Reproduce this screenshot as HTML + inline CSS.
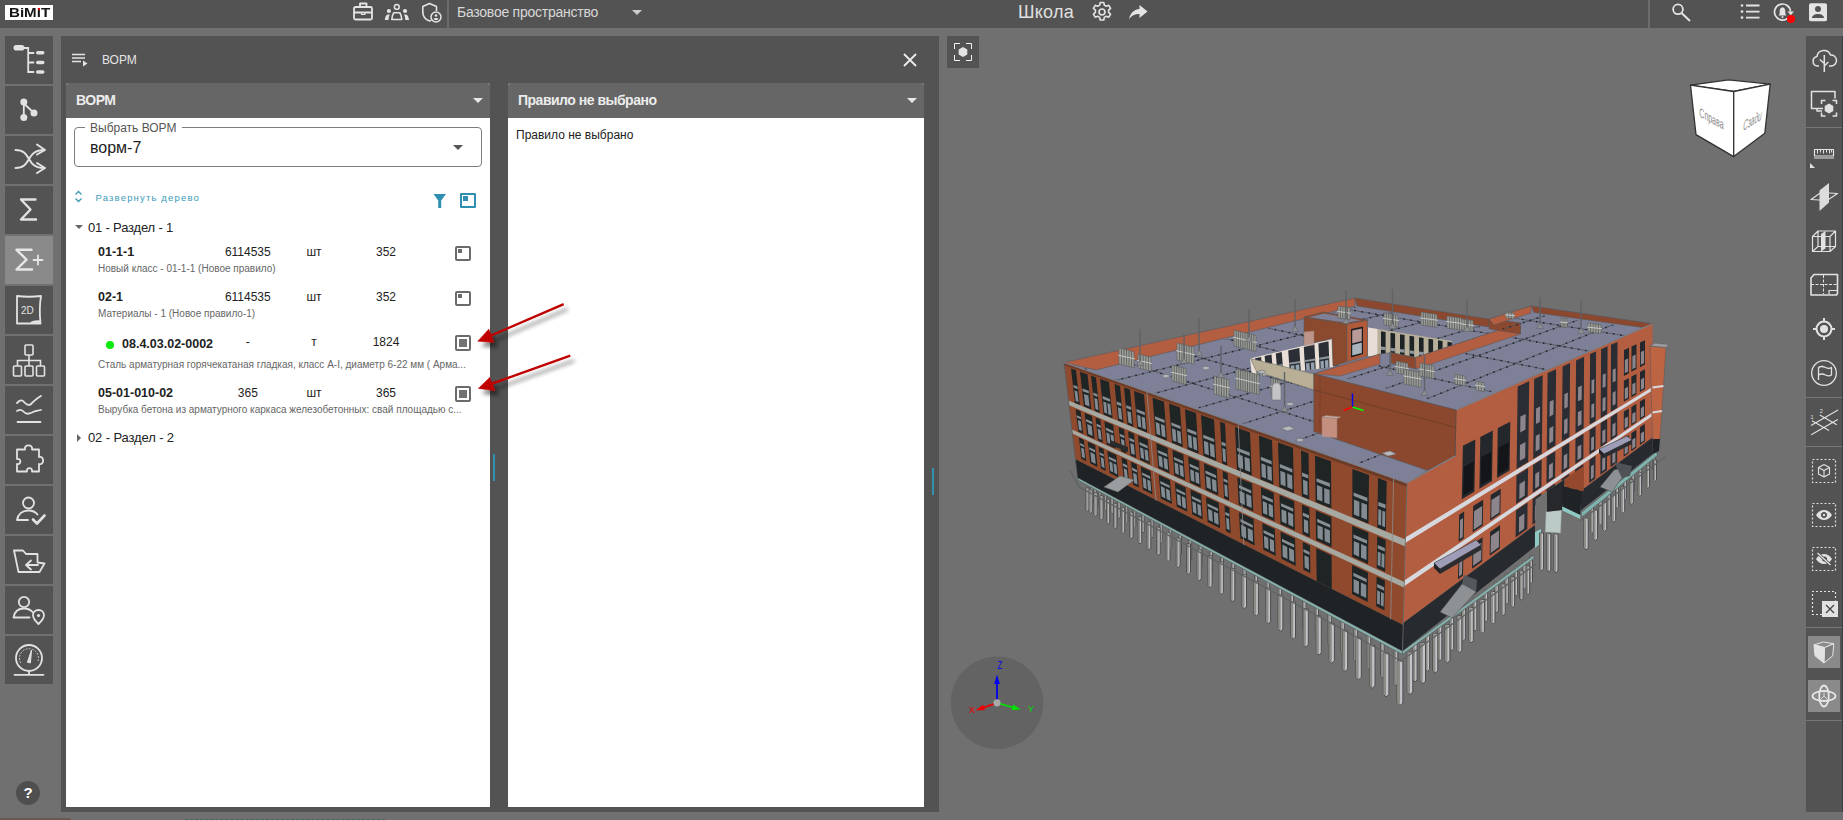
<!DOCTYPE html>
<html lang="ru">
<head>
<meta charset="utf-8">
<title>BIMIT - ВОРМ</title>
<style>
*{box-sizing:border-box;margin:0;padding:0}
html,body{width:1843px;height:820px;overflow:hidden;background:#707070;font-family:"Liberation Sans",sans-serif;color:#222}
.abs{position:absolute}
#top{position:absolute;left:0;top:0;width:1843px;height:28px;background:#535353}
#logo{position:absolute;left:5px;top:5px;width:48px;height:15px;background:#fff;color:#151515;font-weight:bold;font-size:12px;line-height:15px;white-space:nowrap;overflow:hidden}
#logo span{position:absolute;left:3.500px;top:1px;display:inline-block;transform-origin:0 0;transform:scaleX(1.260)}
#logo i{position:absolute;left:32.600px;top:2.900px;width:2.300px;height:2.100px;background:#f00000}
.tdiv{position:absolute;top:0;width:2px;height:28px;background:#6c6c6c}
#space{position:absolute;left:457px;top:0;line-height:25px;font-size:14px;letter-spacing:-0.25px;color:#d8d8d8;white-space:nowrap}
#title{position:absolute;left:1018px;top:0;line-height:24px;font-size:18px;letter-spacing:0.25px;color:#e0e0e0;white-space:nowrap}
.caret{position:absolute;width:0;height:0;border-left:5px solid transparent;border-right:5px solid transparent;border-top:5px solid #ccc}
.lb{position:absolute;left:5px;width:48px;height:48px;background:#535353}
.lb.act{background:#8a8a8a}
.rb{position:absolute;left:1805px;width:36px;background:#535353}
#panel{position:absolute;left:61px;top:36px;width:878px;height:776px;background:#535353}
.card{position:absolute;background:#fff;border-radius:3px 3px 0 0;overflow:hidden}
.chead{position:absolute;left:0;top:0;right:0;height:35px;background:#666;color:#ececec;font-weight:bold;font-size:14px;line-height:35px;padding-left:10px;white-space:nowrap;letter-spacing:-0.5px}
.row{position:absolute;left:0;width:424px;white-space:nowrap}
.t{position:absolute;white-space:nowrap;line-height:16px;color:#222}
.t.c{text-align:center}
.t.b{font-weight:bold}
.t.s{color:#666}
.code{position:absolute;font-weight:bold;font-size:12.5px;color:#222}
.num{position:absolute;font-size:12px;color:#222;text-align:center;width:60px}
.sub{position:absolute;font-size:9.5px;color:#555}
</style>
</head>
<body>
<div id="top">
  <div id="logo"><span>BiMiT</span><i></i></div>
  <div class="tdiv" style="left:447px"></div>
  <div id="space">Базовое пространство</div>
  <div class="caret" style="left:632px;top:10px"></div>
  <div id="title">Школа</div>
  <div class="tdiv" style="left:1648px"></div>
<svg class="abs" style="left:0;top:0" width="1843" height="28" viewBox="0 0 1843 28" fill="none" stroke="#e4e4e4" stroke-width="1.800" stroke-linejoin="round">
<rect x="354" y="7" width="18" height="12.500" rx="1.500"/><path d="M360 7V3.500h6.500V7M354 12.500h18" /><path d="M361.500 12.500v2h3.500v-2" stroke-width="1.200"/>
<circle cx="396.800" cy="6.900" r="2.400" stroke-width="1.500"/><circle cx="388.900" cy="11" r="2.100" fill="#e4e4e4" stroke="none"/><circle cx="405" cy="11" r="2.100" fill="#e4e4e4" stroke="none"/>
<path d="M391.800 19.500c0.300-3 1-5.500 2-6.800h6c1 1.300 1.700 3.800 2 6.800z" stroke-width="1.600"/>
<path d="M384.800 20c0.300-3 1.300-5.300 3-5.500h2c-0.800 1.500-1.200 3.500-1.300 5.500zM409 20c-0.300-3-1.300-5.300-3-5.500h-2c0.800 1.500 1.200 3.500 1.300 5.500z" fill="#e4e4e4" stroke="none"/>
<path d="M436.500 11V6.500L429.500 3.500L422.800 6.500v5.500c0 4 2.500 7.500 6.700 9c0.700-0.300 1.300-0.600 1.800-0.900" stroke-width="1.600"/>
<circle cx="436" cy="17" r="5" stroke-width="1.500"/><circle cx="436" cy="15.500" r="1.300" fill="#e4e4e4" stroke="none"/><path d="M433.500 19c1-1.300 4-1.300 5 0c-1 1.500-4 1.500-5 0z" fill="#e4e4e4" stroke="none"/>
<!-- gear -->
<g transform="translate(1102 12)"><circle r="3" stroke-width="1.700"/><path d="M-1.800 -9.500h3.600l0.500 2.600l2 1.100l2.500-0.900l1.800 3.100l-2 1.700v2.300l2 1.700l-1.800 3.100l-2.500-0.900l-2 1.100l-0.500 2.600h-3.600l-0.500-2.600l-2-1.100l-2.500 0.900l-1.800-3.100l2-1.700v-2.300l-2-1.700l1.800-3.100l2.500 0.900l2-1.100z" stroke-width="1.600"/></g>
<!-- share -->
<path d="M1139.500 5l8 6.500l-8 6.500v-4c-5 0-8 1.500-10.500 5.500c1-6 4.500-10 10.500-10.500z" fill="#e4e4e4" stroke="none"/>
<!-- search -->
<circle cx="1678" cy="9.300" r="4.900" stroke-width="1.800"/><path d="M1681.500 13l8.500 8" stroke-width="2"/>
<!-- list -->
<path d="M1746 5.500h13.500M1746 11.600h13.500M1746 17.600h13.500" stroke-width="1.800"/><circle cx="1742" cy="5.500" r="1.300" fill="#e4e4e4" stroke="none"/><circle cx="1742" cy="11.600" r="1.300" fill="#e4e4e4" stroke="none"/><circle cx="1742" cy="17.600" r="1.300" fill="#e4e4e4" stroke="none"/>
<!-- bell -->
<path d="M1790.500 11.500a8 8 0 1 0 -3 6.800" stroke-width="1.700"/><path d="M1787.500 11.500h6.500l-3.300 3.800z" fill="#e4e4e4" stroke="none"/>
<path d="M1778.500 15.500c1.200-1 1.200-2.500 1.200-4.500c0-2 1-3.500 2.800-3.800c1.800 0.300 2.800 1.800 2.800 3.800c0 2 0 3.500 1.200 4.500z" fill="#e4e4e4" stroke="none"/><circle cx="1782.500" cy="17" r="1" fill="#e4e4e4" stroke="none"/>
<circle cx="1791" cy="18.900" r="4" fill="#f00" stroke="none"/>
<!-- user -->
<rect x="1809" y="3.300" width="18" height="18" rx="1.800" fill="#e4e4e4" stroke="none"/><circle cx="1818" cy="9" r="3" fill="#535353" stroke="none"/><path d="M1812 18c0-2.500 3-4 6-4s6 1.500 6 4z" fill="#535353" stroke="none"/>
</svg>

</div>
<div id="left">
<div class="lb" style="top:36px"><svg width="48" height="48" viewBox="0 0 48 48" fill="none" stroke="#e2e2e2" stroke-width="2" stroke-linecap="round"><rect x="9.5" y="10" width="9" height="3.6" rx="1.8" fill="#e2e2e2"/><path d="M18 12h5.2v24h6M23.2 17h6M23.2 26.5h6" stroke-linecap="butt" stroke-width="1.8"/><rect x="31" y="15" width="8.5" height="3.6" rx="1.8" fill="#e2e2e2" stroke="none"/><rect x="31" y="24.7" width="8.5" height="3.6" rx="1.8" fill="#e2e2e2" stroke="none"/><rect x="31" y="34.2" width="8.5" height="3.6" rx="1.8" fill="#e2e2e2" stroke="none"/></svg></div>
<div class="lb" style="top:86px"><svg width="48" height="48" viewBox="0 0 48 48" fill="#e2e2e2" stroke="#e2e2e2" stroke-width="1.8"><circle cx="18.8" cy="16" r="2.6"/><circle cx="18.8" cy="31.5" r="2.6"/><circle cx="29" cy="27" r="2.6"/><path d="M18.8 16v15.5M18.8 17.5L29 27" fill="none"/></svg></div>
<div class="lb" style="top:136px"><svg width="48" height="48" viewBox="0 0 48 48" fill="none" stroke="#e2e2e2" stroke-width="2" stroke-linecap="round" stroke-linejoin="round"><path d="M10.5 14c9 0 11 5 13.5 9s5 9 15 9M10.500 32c9 0 11-5 13.500-9s5-9 15-9"/><path d="M32 8.500l8 5.500l-8 4.500M32 27l8 5l-8 5"/></svg></div>
<div class="lb" style="top:186px"><svg width="48" height="48" viewBox="0 0 48 48" fill="none" stroke="#e2e2e2" stroke-width="2.400" stroke-linecap="round" stroke-linejoin="round"><path d="M30.500 13.500H16l9.500 10L16 33.500h15"/></svg></div>
<div class="lb act" style="top:236px"><svg width="48" height="48" viewBox="0 0 48 48" fill="none" stroke="#e6e6e6" stroke-width="2.400" stroke-linecap="round" stroke-linejoin="round"><path d="M26.500 13.800H11.500l10 9.800L11.500 33.500h15.500"/><path d="M33 19.500v9M28.500 24h9" stroke-width="1.800"/></svg></div>
<div class="lb" style="top:286px"><svg width="48" height="48" viewBox="0 0 48 48" fill="none" stroke="#e2e2e2" stroke-width="1.800" stroke-linejoin="round"><path d="M12 10c8 1 16 1 24 0c-1.500 9-1.500 18-0.500 27.500H12z"/><path d="M25 37c1-2 5-3 10-2.500v3z" fill="#e2e2e2" stroke="none"/><text x="16" y="28" font-family="Liberation Sans, sans-serif" font-size="10" fill="#e2e2e2" stroke="none">2D</text></svg></div>
<div class="lb" style="top:336px"><svg width="48" height="48" viewBox="0 0 48 48" fill="none" stroke="#e2e2e2" stroke-width="1.600"><rect x="20" y="9" width="8" height="10" rx="1"/><rect x="8.500" y="30" width="8" height="10" rx="1"/><rect x="20" y="30" width="8" height="10" rx="1"/><rect x="31.500" y="30" width="8" height="10" rx="1"/><path d="M24 19v11M12.500 30v-5.500h23V30"/></svg></div>
<div class="lb" style="top:386px"><svg width="48" height="48" viewBox="0 0 48 48" fill="none" stroke="#e2e2e2" stroke-width="1.800" stroke-linecap="round" stroke-linejoin="round"><path d="M12 17c3-3 5-3.500 7-1s5 4 7 2s6-6 10-8"/><path d="M12 25c3-2 5-1.500 7 1s5 2 8 0.500s5-1.500 9-2.500"/><path d="M12.500 36h23"/></svg></div>
<div class="lb" style="top:436px"><svg width="48" height="48" viewBox="0 0 48 48" fill="none" stroke="#e2e2e2" stroke-width="1.800" stroke-linejoin="round"><path d="M20 13.500c-1.500-5.500 8.500-5.500 7 0h7v7.500c5.500-1.500 5.500 8.500 0 7v7.500h-7c1-4.500-6-4.500-5 0h-10v-7.500c4.500 1 4.500-6 0-5v-9.500z"/></svg></div>
<div class="lb" style="top:486px"><svg width="48" height="48" viewBox="0 0 48 48" fill="none" stroke="#e2e2e2" stroke-width="1.800" stroke-linecap="round" stroke-linejoin="round"><circle cx="23.500" cy="17" r="5.500"/><path d="M12 34c1-6 5.500-9.500 11.500-9.500c4 0 7 1.500 9 4M12 34h11"/><path d="M28 33.500l4 4l7.500-8" stroke-width="2.600"/></svg></div>
<div class="lb" style="top:536px"><svg width="48" height="48" viewBox="0 0 48 48" fill="none" stroke="#e2e2e2" stroke-width="1.800" stroke-linecap="round" stroke-linejoin="round"><path d="M9 14.500h9l3 3.500h11.500v8.500l7 1l-5 8.500H13.500z"/><path d="M33 29H21.500M26 24.500L21 29l5 4.500"/></svg></div>
<div class="lb" style="top:586px"><svg width="48" height="48" viewBox="0 0 48 48" fill="none" stroke="#e2e2e2" stroke-width="1.800" stroke-linecap="round" stroke-linejoin="round"><circle cx="19" cy="16" r="5.200"/><path d="M8.500 31.500c1-6 5-9 10.500-9c4 0 7 1.500 9 4M8.500 31.500h16"/><path d="M33.500 24c-3 0-5.500 2.200-5.500 5.200c0 3.500 5.500 8.800 5.500 8.800s5.500-5.300 5.500-8.800c0-3-2.500-5.200-5.500-5.200z" fill="#535353"/><circle cx="33.500" cy="29.500" r="1.600" fill="#e2e2e2" stroke="none"/></svg></div>
<div class="lb" style="top:636px"><svg width="48" height="48" viewBox="0 0 48 48" fill="none" stroke="#e2e2e2" stroke-width="1.800" stroke-linecap="round"><circle cx="24" cy="22" r="13"/><path d="M15.500 26.500a9.500 9.500 0 1 1 17 0" stroke-width="1" stroke-dasharray="1 2.200" opacity=".85"/><path d="M22.500 26l4-12l-1 12.500z" fill="#e2e2e2" stroke-width="1"/><path d="M24 35v3.500M9.500 38.800h29"/></svg></div>
<div class="abs" style="left:16px;top:781px;width:24px;height:24px;border-radius:12px;background:#4f4f4f;color:#fff;font-weight:bold;font-size:15px;line-height:24px;text-align:center">?</div>
</div>

<div class="abs" style="left:0;top:818px;width:71px;height:2px;background:#6a5853"></div>
<div class="abs" style="left:185px;top:818.500px;width:200px;height:0;border-top:1.500px dashed #3f5f62;opacity:.8"></div>
<div id="panel">
  <svg class="abs" style="left:9px;top:16px" width="20" height="16" viewBox="0 0 20 16" fill="none" stroke="#e4e4e4" stroke-width="1.600"><path d="M2 2.500h13M2 6h13M2 9.500h9"/><path d="M13 8.500v6l4.500-3z" fill="#e4e4e4" stroke="none"/></svg>
  <svg class="abs" style="left:841px;top:16px" width="16" height="16" viewBox="0 0 16 16" fill="none" stroke="#ececec" stroke-width="1.800"><path d="M2 2l12 12M14 2L2 14"/></svg>
  <div class="abs" style="left:41px;top:12px;font-size:12px;line-height:24px;color:#e4e4e4">ВОРМ</div>
  <div class="card" id="c1" style="left:5px;top:47px;width:424px;height:724px">
    <div class="chead">ВОРМ</div>
    <div class="caret" style="left:407px;top:15px;border-top-color:#e8e8e8"></div>
<div class="abs" style="left:8px;top:44px;width:408px;height:40px;border:1px solid #7d7d7d;border-radius:4px"></div>
<div class="abs" style="left:19px;top:36px;width:97px;height:16px;background:#fff"></div>
<div id="t_lbl" class="t " style="left:24px;top:36.5px;font-size:12px;color:#555;">Выбрать ВОРМ</div>
<div id="t_sel" class="t " style="left:24px;top:57px;font-size:16px;color:#222;">ворм-7</div>
<div class="caret" style="left:387px;top:62px;border-top-color:#555;border-left-width:5px;border-right-width:5px;border-top-width:5px"></div>
<svg class="abs" style="left:6px;top:106px" width="14" height="16" viewBox="0 0 14 16" fill="none" stroke="#3a9ab8" stroke-width="1.300"><path d="M3.500 5.500L6.500 2.500L9.500 5.500M3.500 9.500L6.500 12.500L9.500 9.500"/></svg>
<div id="t_exp" class="t " style="left:29.5px;top:106.5px;font-size:9.5px;color:#3a9ab8;letter-spacing:1.17px;">Развернуть дерево</div>
<svg class="abs" style="left:366px;top:109px" width="16" height="18" viewBox="0 0 16 18"><path d="M1.500 2h12.500l-4.800 6.500v7.500h-3v-7.500z" fill="#2f8fb2"/></svg>
<div class="abs" style="left:394px;top:110px;width:16px;height:15px;border:2px solid #2f8fb2;border-radius:1px"><div style="position:absolute;left:0.500px;top:0.500px;width:5.500px;height:5px;background:#2f8fb2"></div></div>
<div class="caret" style="left:9px;top:142px;border-top-color:#666;border-left-width:4px;border-right-width:4px;border-top-width:4px"></div>
<div id="t_s1" class="t " style="letter-spacing:-0.18px;left:22px;top:136.5px;font-size:13px;">01 - Раздел - 1</div>
<div id="t_r1" class="t b" style="left:32px;top:160.5px;font-size:12.5px;">01-1-1</div>
<div id="t_r1a" class="t c " style="left:141.8px;width:80px;top:160.5px;font-size:12px">6114535</div>
<div id="t_r1b" class="t c " style="left:208px;width:80px;top:160.5px;font-size:12px">шт</div>
<div id="t_r1c" class="t c " style="left:280px;width:80px;top:160.5px;font-size:12px">352</div>
<div class="abs" style="left:389px;top:162.5px;width:16px;height:15.500px;border:2px solid #6b6b6b;border-radius:2px"><div style="position:absolute;left:1px;top:1px;width:4px;height:4px;background:#6b6b6b"></div></div>
<div id="t_u1" class="t s" style="left:32px;top:177.8px;font-size:10px;">Новый класс - 01-1-1 (Новое правило)</div>
<div id="t_r2" class="t b" style="left:32px;top:205.5px;font-size:12.5px;">02-1</div>
<div id="t_r2a" class="t c " style="left:141.8px;width:80px;top:205.5px;font-size:12px">6114535</div>
<div id="t_r2b" class="t c " style="left:208px;width:80px;top:205.5px;font-size:12px">шт</div>
<div id="t_r2c" class="t c " style="left:280px;width:80px;top:205.5px;font-size:12px">352</div>
<div class="abs" style="left:389px;top:207.5px;width:16px;height:15.500px;border:2px solid #6b6b6b;border-radius:2px"><div style="position:absolute;left:1px;top:1px;width:4px;height:4px;background:#6b6b6b"></div></div>
<div id="t_u2" class="t s" style="left:32px;top:222.8px;font-size:10px;">Материалы - 1 (Новое правило-1)</div>
<div class="abs" style="left:40px;top:258.3px;width:8px;height:8px;border-radius:4px;background:#0be80b"></div>
<div id="t_r3" class="t b" style="left:56px;top:252.5px;font-size:12.5px;">08.4.03.02-0002</div>
<div id="t_r3a" class="t c " style="left:141.8px;width:80px;top:251px;font-size:12px">-</div>
<div id="t_r3b" class="t c " style="left:208px;width:80px;top:251px;font-size:12px">т</div>
<div id="t_r3c" class="t c " style="left:280px;width:80px;top:251px;font-size:12px">1824</div>
<div class="abs" style="left:389px;top:252.2px;width:16px;height:15.500px;border:2px solid #6b6b6b;border-radius:2px"><div style="position:absolute;left:1.800px;top:1.800px;width:8.400px;height:8px;background:#727272"></div></div>
<div id="t_u3" class="t s" style="left:32px;top:274px;font-size:10px;">Сталь арматурная горячекатаная гладкая, класс A-I, диаметр 6-22 мм ( Арма...</div>
<div id="t_r4" class="t b" style="left:32px;top:301.8px;font-size:12.5px;">05-01-010-02</div>
<div id="t_r4a" class="t c " style="left:141.8px;width:80px;top:301.8px;font-size:12px">365</div>
<div id="t_r4b" class="t c " style="left:208px;width:80px;top:301.8px;font-size:12px">шт</div>
<div id="t_r4c" class="t c " style="left:280px;width:80px;top:301.8px;font-size:12px">365</div>
<div class="abs" style="left:389px;top:303.0px;width:16px;height:15.500px;border:2px solid #6b6b6b;border-radius:2px"><div style="position:absolute;left:1.800px;top:1.800px;width:8.400px;height:8px;background:#727272"></div></div>
<div id="t_u4" class="t s" style="left:32px;top:319px;font-size:10px;">Вырубка бетона из арматурного каркаса железобетонных: свай площадью с...</div>
<div class="abs" style="left:11px;top:350.5px;width:0;height:0;border-top:4px solid transparent;border-bottom:4px solid transparent;border-left:4px solid #666"></div>
<div id="t_s2" class="t " style="letter-spacing:-0.12px;left:22px;top:347px;font-size:13px;">02 - Раздел - 2</div>
  </div>
  <div class="card" id="c2" style="left:447px;top:47px;width:416px;height:724px">
    <div class="chead">Правило не выбрано</div>
    <div class="caret" style="left:399px;top:15px;border-top-color:#e8e8e8"></div>
    <div class="abs" style="left:8px;top:45px;font-size:12px;line-height:14px;color:#222">Правило не выбрано</div>
  </div>
</div>
<svg class="abs" style="left:460px;top:290px;z-index:5" width="140" height="120" viewBox="460 290 140 120">
<defs><filter id="sh" x="-20%" y="-20%" width="150%" height="150%"><feGaussianBlur in="SourceAlpha" stdDeviation="2"/><feOffset dx="4" dy="4.500"/><feComponentTransfer><feFuncA type="linear" slope="0.480"/></feComponentTransfer><feMerge><feMergeNode/><feMergeNode in="SourceGraphic"/></feMerge></filter></defs>
<g filter="url(#sh)" fill="#c00000" stroke="#c00000">
<path d="M563.700 304.200L490 336" stroke-width="2.400" fill="none"/><path d="M477.800 341.200L488.800 329.200L493.900 342.300z" stroke-width=".6"/>
<path d="M570.300 355.600L491 384" stroke-width="2.400" fill="none"/><path d="M478.400 388.400L489.800 377.400L494.900 390.600z" stroke-width=".6"/>
</g></svg>
<div class="abs" style="left:493px;top:454px;width:2px;height:27px;background:#3391b0"></div>
<div class="abs" style="left:932px;top:468px;width:2px;height:27px;background:#3391b0"></div>
<svg id="viewer" class="abs" style="left:939px;top:28px" width="867" height="792" viewBox="939 28 867 792" font-family="Liberation Sans, sans-serif">
<g id="bld">
<g id="piles">
<path d="M1090.9 484h2.2v17l-1.1 1l-1.1 -1z" fill="#c2c2c8" stroke="#4c4c4c" stroke-width="1"/>
<path d="M1091.2 484h1v17.7l-1 -0.7z" fill="#8b8c86"/>
<path d="M1094 485.7h2.2v17.2l-1.1 1l-1.1 -1z" fill="#c2c2c8" stroke="#4c4c4c" stroke-width="1"/>
<path d="M1094.3 485.7h1v17.9l-1 -0.7z" fill="#8b8c86"/>
<path d="M1098.7 488.2h2.2v17.5l-1.1 1l-1.1 -1z" fill="#c2c2c8" stroke="#4c4c4c" stroke-width="1"/>
<path d="M1099 488.2h1v18.2l-1 -0.7z" fill="#8b8c86"/>
<path d="M1104.4 491.3h2.3v17.8l-1.1 1l-1.1 -1z" fill="#c2c2c8" stroke="#4c4c4c" stroke-width="1"/>
<path d="M1104.7 491.3h1v18.5l-1 -0.7z" fill="#8b8c86"/>
<path d="M1110.9 494.8h2.3v18.3l-1.1 1l-1.1 -1z" fill="#c2c2c8" stroke="#4c4c4c" stroke-width="1"/>
<path d="M1111.2 494.8h1v18.9l-1 -0.7z" fill="#8b8c86"/>
<path d="M1117.9 498.6h2.3v18.7l-1.2 1l-1.2 -1z" fill="#c2c2c8" stroke="#4c4c4c" stroke-width="1"/>
<path d="M1118.2 498.6h1v19.4l-1 -0.7z" fill="#8b8c86"/>
<path d="M1125.4 502.7h2.4v19.2l-1.2 1.1l-1.2 -1.1z" fill="#c2c2c8" stroke="#4c4c4c" stroke-width="1"/>
<path d="M1125.7 502.7h1.1v19.9l-1.1 -0.7z" fill="#8b8c86"/>
<path d="M1133.4 507h2.4v19.7l-1.2 1.1l-1.2 -1.1z" fill="#c2c2c8" stroke="#4c4c4c" stroke-width="1"/>
<path d="M1133.7 507h1.1v20.4l-1.1 -0.7z" fill="#8b8c86"/>
<path d="M1141.8 511.5h2.4v20.2l-1.2 1.1l-1.2 -1.1z" fill="#c2c2c8" stroke="#4c4c4c" stroke-width="1"/>
<path d="M1142.1 511.5h1.1v20.9l-1.1 -0.7z" fill="#8b8c86"/>
<path d="M1150.6 516.3h2.5v20.7l-1.2 1.1l-1.2 -1.1z" fill="#c2c2c8" stroke="#4c4c4c" stroke-width="1"/>
<path d="M1150.9 516.3h1.1v21.5l-1.1 -0.7z" fill="#8b8c86"/>
<path d="M1159.7 521.2h2.5v21.3l-1.3 1.1l-1.3 -1.1z" fill="#c2c2c8" stroke="#4c4c4c" stroke-width="1"/>
<path d="M1160 521.2h1.1v22.1l-1.1 -0.8z" fill="#8b8c86"/>
<path d="M1169.2 526.3h2.6v21.9l-1.3 1.2l-1.3 -1.2z" fill="#c2c2c8" stroke="#4c4c4c" stroke-width="1"/>
<path d="M1169.5 526.3h1.2v22.7l-1.2 -0.8z" fill="#8b8c86"/>
<path d="M1178.9 531.6h2.6v22.5l-1.3 1.2l-1.3 -1.2z" fill="#c2c2c8" stroke="#4c4c4c" stroke-width="1"/>
<path d="M1179.2 531.6h1.2v23.3l-1.2 -0.8z" fill="#8b8c86"/>
<path d="M1189 537h2.7v23.1l-1.3 1.2l-1.3 -1.2z" fill="#c2c2c8" stroke="#4c4c4c" stroke-width="1"/>
<path d="M1189.3 537h1.2v23.9l-1.2 -0.8z" fill="#8b8c86"/>
<path d="M1199.3 542.6h2.7v23.8l-1.4 1.2l-1.4 -1.2z" fill="#c2c2c8" stroke="#4c4c4c" stroke-width="1"/>
<path d="M1199.6 542.6h1.2v24.6l-1.2 -0.8z" fill="#8b8c86"/>
<path d="M1209.9 548.3h2.7v24.5l-1.4 1.2l-1.4 -1.2z" fill="#c2c2c8" stroke="#4c4c4c" stroke-width="1"/>
<path d="M1210.2 548.3h1.2v25.3l-1.2 -0.8z" fill="#8b8c86"/>
<path d="M1220.7 554.2h2.8v25.1l-1.4 1.3l-1.4 -1.3z" fill="#c2c2c8" stroke="#4c4c4c" stroke-width="1"/>
<path d="M1221 554.2h1.3v26l-1.3 -0.8z" fill="#8b8c86"/>
<path d="M1231.8 560.2h2.9v25.8l-1.4 1.3l-1.4 -1.3z" fill="#c2c2c8" stroke="#4c4c4c" stroke-width="1"/>
<path d="M1232.1 560.2h1.3v26.7l-1.3 -0.9z" fill="#8b8c86"/>
<path d="M1243.1 566.3h2.9v26.5l-1.5 1.3l-1.5 -1.3z" fill="#c2c2c8" stroke="#4c4c4c" stroke-width="1"/>
<path d="M1243.4 566.3h1.3v27.4l-1.3 -0.9z" fill="#8b8c86"/>
<path d="M1254.6 572.5h3v27.3l-1.5 1.3l-1.5 -1.3z" fill="#c2c2c8" stroke="#4c4c4c" stroke-width="1"/>
<path d="M1254.9 572.5h1.3v28.1l-1.3 -0.9z" fill="#8b8c86"/>
<path d="M1266.3 578.9h3v28l-1.5 1.4l-1.5 -1.4z" fill="#c2c2c8" stroke="#4c4c4c" stroke-width="1"/>
<path d="M1266.6 578.9h1.4v28.9l-1.4 -0.9z" fill="#8b8c86"/>
<path d="M1278.3 585.3h3.1v28.7l-1.5 1.4l-1.5 -1.4z" fill="#c2c2c8" stroke="#4c4c4c" stroke-width="1"/>
<path d="M1278.6 585.3h1.4v29.7l-1.4 -0.9z" fill="#8b8c86"/>
<path d="M1290.4 591.9h3.1v29.5l-1.6 1.4l-1.6 -1.4z" fill="#c2c2c8" stroke="#4c4c4c" stroke-width="1"/>
<path d="M1290.7 591.9h1.4v30.4l-1.4 -0.9z" fill="#8b8c86"/>
<path d="M1302.8 598.6h3.2v30.3l-1.6 1.4l-1.6 -1.4z" fill="#c2c2c8" stroke="#4c4c4c" stroke-width="1"/>
<path d="M1303.1 598.6h1.4v31.2l-1.4 -1z" fill="#8b8c86"/>
<path d="M1315.3 605.3h3.2v31.1l-1.6 1.5l-1.6 -1.5z" fill="#c2c2c8" stroke="#4c4c4c" stroke-width="1"/>
<path d="M1315.6 605.3h1.5v32l-1.5 -1z" fill="#8b8c86"/>
<path d="M1328 612.2h3.3v31.9l-1.6 1.5l-1.6 -1.5z" fill="#c2c2c8" stroke="#4c4c4c" stroke-width="1"/>
<path d="M1328.3 612.2h1.5v32.8l-1.5 -1z" fill="#8b8c86"/>
<path d="M1340.9 619.2h3.4v32.7l-1.7 1.5l-1.7 -1.5z" fill="#c2c2c8" stroke="#4c4c4c" stroke-width="1"/>
<path d="M1341.2 619.2h1.5v33.7l-1.5 -1z" fill="#8b8c86"/>
<path d="M1354 626.3h3.4v33.5l-1.7 1.5l-1.7 -1.5z" fill="#c2c2c8" stroke="#4c4c4c" stroke-width="1"/>
<path d="M1354.3 626.3h1.5v34.5l-1.5 -1z" fill="#8b8c86"/>
<path d="M1367.2 633.4h3.5v34.3l-1.7 1.6l-1.7 -1.6z" fill="#c2c2c8" stroke="#4c4c4c" stroke-width="1"/>
<path d="M1367.5 633.4h1.6v35.4l-1.6 -1z" fill="#8b8c86"/>
<path d="M1380.6 640.7h3.5v35.2l-1.8 1.6l-1.8 -1.6z" fill="#c2c2c8" stroke="#4c4c4c" stroke-width="1"/>
<path d="M1380.9 640.7h1.6v36.2l-1.6 -1.1z" fill="#8b8c86"/>
<path d="M1394.2 648h3.6v36l-1.8 1.6l-1.8 -1.6z" fill="#c2c2c8" stroke="#4c4c4c" stroke-width="1"/>
<path d="M1394.5 648h1.6v37.1l-1.6 -1.1z" fill="#8b8c86"/>
<path d="M1086 488h3v22l-1.5 1.4l-1.5 -1.4z" fill="#c2c2c8" stroke="#4c4c4c" stroke-width="1"/>
<path d="M1086.3 488h1.4v22.9l-1.4 -0.9z" fill="#8b8c86"/>
<path d="M1089.2 489.8h3v22.2l-1.5 1.4l-1.5 -1.4z" fill="#c2c2c8" stroke="#4c4c4c" stroke-width="1"/>
<path d="M1089.5 489.8h1.4v23.1l-1.4 -0.9z" fill="#8b8c86"/>
<path d="M1094 492.5h3.1v22.5l-1.5 1.4l-1.5 -1.4z" fill="#c2c2c8" stroke="#4c4c4c" stroke-width="1"/>
<path d="M1094.3 492.5h1.4v23.4l-1.4 -0.9z" fill="#8b8c86"/>
<path d="M1099.9 495.7h3.1v22.9l-1.6 1.4l-1.6 -1.4z" fill="#c2c2c8" stroke="#4c4c4c" stroke-width="1"/>
<path d="M1100.2 495.7h1.4v23.8l-1.4 -0.9z" fill="#8b8c86"/>
<path d="M1106.5 499.4h3.2v23.3l-1.6 1.4l-1.6 -1.4z" fill="#c2c2c8" stroke="#4c4c4c" stroke-width="1"/>
<path d="M1106.8 499.4h1.4v24.3l-1.4 -1z" fill="#8b8c86"/>
<path d="M1113.7 503.4h3.2v23.8l-1.6 1.5l-1.6 -1.5z" fill="#c2c2c8" stroke="#4c4c4c" stroke-width="1"/>
<path d="M1114 503.4h1.5v24.8l-1.5 -1z" fill="#8b8c86"/>
<path d="M1121.4 507.7h3.3v24.3l-1.7 1.5l-1.7 -1.5z" fill="#c2c2c8" stroke="#4c4c4c" stroke-width="1"/>
<path d="M1121.7 507.7h1.5v25.3l-1.5 -1z" fill="#8b8c86"/>
<path d="M1129.6 512.3h3.4v24.8l-1.7 1.5l-1.7 -1.5z" fill="#c2c2c8" stroke="#4c4c4c" stroke-width="1"/>
<path d="M1129.9 512.3h1.5v25.8l-1.5 -1z" fill="#8b8c86"/>
<path d="M1138.2 517h3.5v25.4l-1.7 1.6l-1.7 -1.6z" fill="#c2c2c8" stroke="#4c4c4c" stroke-width="1"/>
<path d="M1138.5 517h1.6v26.4l-1.6 -1z" fill="#8b8c86"/>
<path d="M1147.2 522.1h3.6v25.9l-1.8 1.6l-1.8 -1.6z" fill="#c2c2c8" stroke="#4c4c4c" stroke-width="1"/>
<path d="M1147.5 522.1h1.6v27l-1.6 -1.1z" fill="#8b8c86"/>
<path d="M1156.6 527.3h3.6v26.5l-1.8 1.6l-1.8 -1.6z" fill="#c2c2c8" stroke="#4c4c4c" stroke-width="1"/>
<path d="M1156.9 527.3h1.6v27.6l-1.6 -1.1z" fill="#8b8c86"/>
<path d="M1166.3 532.6h3.7v27.2l-1.9 1.7l-1.9 -1.7z" fill="#c2c2c8" stroke="#4c4c4c" stroke-width="1"/>
<path d="M1166.6 532.6h1.7v28.3l-1.7 -1.1z" fill="#8b8c86"/>
<path d="M1176.3 538.2h3.8v27.8l-1.9 1.7l-1.9 -1.7z" fill="#c2c2c8" stroke="#4c4c4c" stroke-width="1"/>
<path d="M1176.6 538.2h1.7v28.9l-1.7 -1.1z" fill="#8b8c86"/>
<path d="M1186.6 543.9h3.9v28.5l-2 1.8l-2 -1.8z" fill="#c2c2c8" stroke="#4c4c4c" stroke-width="1"/>
<path d="M1186.9 543.9h1.8v29.6l-1.8 -1.2z" fill="#8b8c86"/>
<path d="M1197.2 549.8h4v29.1l-2 1.8l-2 -1.8z" fill="#c2c2c8" stroke="#4c4c4c" stroke-width="1"/>
<path d="M1197.5 549.8h1.8v30.3l-1.8 -1.2z" fill="#8b8c86"/>
<path d="M1208 555.9h4.1v29.8l-2 1.8l-2 -1.8z" fill="#c2c2c8" stroke="#4c4c4c" stroke-width="1"/>
<path d="M1208.3 555.9h1.8v31.1l-1.8 -1.2z" fill="#8b8c86"/>
<path d="M1219.2 562h4.2v30.6l-2.1 1.9l-2.1 -1.9z" fill="#c2c2c8" stroke="#4c4c4c" stroke-width="1"/>
<path d="M1219.5 562h1.9v31.8l-1.9 -1.3z" fill="#8b8c86"/>
<path d="M1230.5 568.4h4.3v31.3l-2.2 1.9l-2.2 -1.9z" fill="#c2c2c8" stroke="#4c4c4c" stroke-width="1"/>
<path d="M1230.8 568.4h1.9v32.6l-1.9 -1.3z" fill="#8b8c86"/>
<path d="M1242.1 574.8h4.4v32l-2.2 2l-2.2 -2z" fill="#c2c2c8" stroke="#4c4c4c" stroke-width="1"/>
<path d="M1242.4 574.8h2v33.4l-2 -1.3z" fill="#8b8c86"/>
<path d="M1253.9 581.4h4.5v32.8l-2.3 2l-2.3 -2z" fill="#c2c2c8" stroke="#4c4c4c" stroke-width="1"/>
<path d="M1254.2 581.4h2v34.1l-2 -1.4z" fill="#8b8c86"/>
<path d="M1266 588.1h4.6v33.6l-2.3 2.1l-2.3 -2.1z" fill="#c2c2c8" stroke="#4c4c4c" stroke-width="1"/>
<path d="M1266.3 588.1h2.1v35l-2.1 -1.4z" fill="#8b8c86"/>
<path d="M1278.2 594.9h4.7v34.4l-2.4 2.1l-2.4 -2.1z" fill="#c2c2c8" stroke="#4c4c4c" stroke-width="1"/>
<path d="M1278.5 594.9h2.1v35.8l-2.1 -1.4z" fill="#8b8c86"/>
<path d="M1290.7 601.8h4.8v35.2l-2.4 2.2l-2.4 -2.2z" fill="#c2c2c8" stroke="#4c4c4c" stroke-width="1"/>
<path d="M1291 601.8h2.2v36.6l-2.2 -1.5z" fill="#8b8c86"/>
<path d="M1303.3 608.9h5v36l-2.5 2.2l-2.5 -2.2z" fill="#c2c2c8" stroke="#4c4c4c" stroke-width="1"/>
<path d="M1303.6 608.9h2.2v37.5l-2.2 -1.5z" fill="#8b8c86"/>
<path d="M1316.2 616h5.1v36.8l-2.5 2.3l-2.5 -2.3z" fill="#c2c2c8" stroke="#4c4c4c" stroke-width="1"/>
<path d="M1316.5 616h2.3v38.3l-2.3 -1.5z" fill="#8b8c86"/>
<path d="M1329.2 623.3h5.2v37.6l-2.6 2.3l-2.6 -2.3z" fill="#c2c2c8" stroke="#4c4c4c" stroke-width="1"/>
<path d="M1329.5 623.3h2.3v39.2l-2.3 -1.6z" fill="#8b8c86"/>
<path d="M1342.4 630.6h5.3v38.5l-2.7 2.4l-2.7 -2.4z" fill="#c2c2c8" stroke="#4c4c4c" stroke-width="1"/>
<path d="M1342.7 630.6h2.4v40.1l-2.4 -1.6z" fill="#8b8c86"/>
<path d="M1355.9 638.1h5.4v39.3l-2.7 2.4l-2.7 -2.4z" fill="#c2c2c8" stroke="#4c4c4c" stroke-width="1"/>
<path d="M1356.2 638.1h2.4v41l-2.4 -1.6z" fill="#8b8c86"/>
<path d="M1369.4 645.6h5.6v40.2l-2.8 2.5l-2.8 -2.5z" fill="#c2c2c8" stroke="#4c4c4c" stroke-width="1"/>
<path d="M1369.7 645.6h2.5v41.9l-2.5 -1.7z" fill="#8b8c86"/>
<path d="M1383.2 653.3h5.7v41.1l-2.8 2.6l-2.8 -2.6z" fill="#c2c2c8" stroke="#4c4c4c" stroke-width="1"/>
<path d="M1383.5 653.3h2.6v42.8l-2.6 -1.7z" fill="#8b8c86"/>
<path d="M1397.1 661h5.8v42l-2.9 2.6l-2.9 -2.6z" fill="#c2c2c8" stroke="#4c4c4c" stroke-width="1"/>
<path d="M1397.4 661h2.6v43.7l-2.6 -1.7z" fill="#8b8c86"/>
<path d="M1529.5 556h3v26l-1.5 1.4l-1.5 -1.4z" fill="#c2c2c8" stroke="#4c4c4c" stroke-width="1"/>
<path d="M1529.8 556h1.4v26.9l-1.4 -0.9z" fill="#8b8c86"/>
<path d="M1522.9 560.8h3.1v26.7l-1.5 1.4l-1.5 -1.4z" fill="#c2c2c8" stroke="#4c4c4c" stroke-width="1"/>
<path d="M1523.2 560.8h1.4v27.6l-1.4 -0.9z" fill="#8b8c86"/>
<path d="M1514.4 567.1h3.2v27.6l-1.6 1.4l-1.6 -1.4z" fill="#c2c2c8" stroke="#4c4c4c" stroke-width="1"/>
<path d="M1514.7 567.1h1.4v28.5l-1.4 -0.9z" fill="#8b8c86"/>
<path d="M1505 574.1h3.3v28.5l-1.6 1.5l-1.6 -1.5z" fill="#c2c2c8" stroke="#4c4c4c" stroke-width="1"/>
<path d="M1505.3 574.1h1.5v29.5l-1.5 -1z" fill="#8b8c86"/>
<path d="M1494.9 581.5h3.4v29.6l-1.7 1.5l-1.7 -1.5z" fill="#c2c2c8" stroke="#4c4c4c" stroke-width="1"/>
<path d="M1495.2 581.5h1.5v30.6l-1.5 -1z" fill="#8b8c86"/>
<path d="M1484.2 589.4h3.5v30.7l-1.7 1.6l-1.7 -1.6z" fill="#c2c2c8" stroke="#4c4c4c" stroke-width="1"/>
<path d="M1484.5 589.4h1.6v31.7l-1.6 -1z" fill="#8b8c86"/>
<path d="M1473.2 597.6h3.6v31.8l-1.8 1.6l-1.8 -1.6z" fill="#c2c2c8" stroke="#4c4c4c" stroke-width="1"/>
<path d="M1473.5 597.6h1.6v32.9l-1.6 -1.1z" fill="#8b8c86"/>
<path d="M1461.7 606h3.7v33l-1.8 1.7l-1.8 -1.7z" fill="#c2c2c8" stroke="#4c4c4c" stroke-width="1"/>
<path d="M1462 606h1.7v34.1l-1.7 -1.1z" fill="#8b8c86"/>
<path d="M1449.9 614.7h3.8v34.2l-1.9 1.7l-1.9 -1.7z" fill="#c2c2c8" stroke="#4c4c4c" stroke-width="1"/>
<path d="M1450.2 614.7h1.7v35.3l-1.7 -1.1z" fill="#8b8c86"/>
<path d="M1437.9 623.6h3.9v35.4l-2 1.8l-2 -1.8z" fill="#c2c2c8" stroke="#4c4c4c" stroke-width="1"/>
<path d="M1438.2 623.6h1.8v36.6l-1.8 -1.2z" fill="#8b8c86"/>
<path d="M1425.5 632.7h4.1v36.7l-2 1.8l-2 -1.8z" fill="#c2c2c8" stroke="#4c4c4c" stroke-width="1"/>
<path d="M1425.8 632.7h1.8v37.9l-1.8 -1.2z" fill="#8b8c86"/>
<path d="M1412.9 642h4.2v38l-2.1 1.9l-2.1 -1.9z" fill="#c2c2c8" stroke="#4c4c4c" stroke-width="1"/>
<path d="M1413.2 642h1.9v39.3l-1.9 -1.3z" fill="#8b8c86"/>
<path d="M1526.3 566h3.4v27l-1.7 1.5l-1.7 -1.5z" fill="#c2c2c8" stroke="#4c4c4c" stroke-width="1"/>
<path d="M1526.6 566h1.5v28l-1.5 -1z" fill="#8b8c86"/>
<path d="M1519.6 570.8h3.5v27.7l-1.8 1.6l-1.8 -1.6z" fill="#c2c2c8" stroke="#4c4c4c" stroke-width="1"/>
<path d="M1519.9 570.8h1.6v28.8l-1.6 -1.1z" fill="#8b8c86"/>
<path d="M1510.9 577.1h3.7v28.7l-1.8 1.7l-1.8 -1.7z" fill="#c2c2c8" stroke="#4c4c4c" stroke-width="1"/>
<path d="M1511.2 577.1h1.7v29.8l-1.7 -1.1z" fill="#8b8c86"/>
<path d="M1501.3 584.1h3.9v29.7l-1.9 1.7l-1.9 -1.7z" fill="#c2c2c8" stroke="#4c4c4c" stroke-width="1"/>
<path d="M1501.6 584.1h1.7v30.9l-1.7 -1.2z" fill="#8b8c86"/>
<path d="M1490.9 591.5h4.1v30.9l-2 1.8l-2 -1.8z" fill="#c2c2c8" stroke="#4c4c4c" stroke-width="1"/>
<path d="M1491.2 591.5h1.8v32.1l-1.8 -1.2z" fill="#8b8c86"/>
<path d="M1480.1 599.4h4.3v32l-2.1 1.9l-2.1 -1.9z" fill="#c2c2c8" stroke="#4c4c4c" stroke-width="1"/>
<path d="M1480.4 599.4h1.9v33.3l-1.9 -1.3z" fill="#8b8c86"/>
<path d="M1468.8 607.6h4.5v33.3l-2.2 2l-2.2 -2z" fill="#c2c2c8" stroke="#4c4c4c" stroke-width="1"/>
<path d="M1469.1 607.6h2v34.6l-2 -1.3z" fill="#8b8c86"/>
<path d="M1457.1 616h4.7v34.6l-2.3 2.1l-2.3 -2.1z" fill="#c2c2c8" stroke="#4c4c4c" stroke-width="1"/>
<path d="M1457.4 616h2.1v36l-2.1 -1.4z" fill="#8b8c86"/>
<path d="M1445 624.7h4.9v35.9l-2.5 2.2l-2.5 -2.2z" fill="#c2c2c8" stroke="#4c4c4c" stroke-width="1"/>
<path d="M1445.3 624.7h2.2v37.3l-2.2 -1.5z" fill="#8b8c86"/>
<path d="M1432.7 633.6h5.1v37.2l-2.6 2.3l-2.6 -2.3z" fill="#c2c2c8" stroke="#4c4c4c" stroke-width="1"/>
<path d="M1433 633.6h2.3v38.8l-2.3 -1.5z" fill="#8b8c86"/>
<path d="M1420.1 642.7h5.4v38.6l-2.7 2.4l-2.7 -2.4z" fill="#c2c2c8" stroke="#4c4c4c" stroke-width="1"/>
<path d="M1420.4 642.7h2.4v40.2l-2.4 -1.6z" fill="#8b8c86"/>
<path d="M1407.2 652h5.6v40l-2.8 2.5l-2.8 -2.5z" fill="#c2c2c8" stroke="#4c4c4c" stroke-width="1"/>
<path d="M1407.5 652h2.5v41.7l-2.5 -1.7z" fill="#8b8c86"/>
<path d="M1652.8 452h2.4v18l-1.2 1.1l-1.2 -1.1z" fill="#c2c2c8" stroke="#4c4c4c" stroke-width="1"/>
<path d="M1653.1 452h1.1v18.7l-1.1 -0.7z" fill="#8b8c86"/>
<path d="M1646.5 457.5h2.5v18.8l-1.2 1.1l-1.2 -1.1z" fill="#c2c2c8" stroke="#4c4c4c" stroke-width="1"/>
<path d="M1646.8 457.5h1.1v19.6l-1.1 -0.7z" fill="#8b8c86"/>
<path d="M1639.2 463.8h2.6v19.7l-1.3 1.2l-1.3 -1.2z" fill="#c2c2c8" stroke="#4c4c4c" stroke-width="1"/>
<path d="M1639.5 463.8h1.2v20.5l-1.2 -0.8z" fill="#8b8c86"/>
<path d="M1631.6 470.4h2.7v20.7l-1.3 1.2l-1.3 -1.2z" fill="#c2c2c8" stroke="#4c4c4c" stroke-width="1"/>
<path d="M1631.9 470.4h1.2v21.5l-1.2 -0.8z" fill="#8b8c86"/>
<path d="M1623.7 477.2h2.8v21.7l-1.4 1.2l-1.4 -1.2z" fill="#c2c2c8" stroke="#4c4c4c" stroke-width="1"/>
<path d="M1624 477.2h1.2v22.6l-1.2 -0.8z" fill="#8b8c86"/>
<path d="M1615.6 484.2h2.9v22.8l-1.4 1.3l-1.4 -1.3z" fill="#c2c2c8" stroke="#4c4c4c" stroke-width="1"/>
<path d="M1615.9 484.2h1.3v23.6l-1.3 -0.9z" fill="#8b8c86"/>
<path d="M1607.3 491.4h3v23.8l-1.5 1.3l-1.5 -1.3z" fill="#c2c2c8" stroke="#4c4c4c" stroke-width="1"/>
<path d="M1607.6 491.4h1.3v24.7l-1.3 -0.9z" fill="#8b8c86"/>
<path d="M1598.9 498.6h3.1v24.9l-1.5 1.4l-1.5 -1.4z" fill="#c2c2c8" stroke="#4c4c4c" stroke-width="1"/>
<path d="M1599.2 498.6h1.4v25.8l-1.4 -0.9z" fill="#8b8c86"/>
<path d="M1590.4 506h3.2v26l-1.6 1.4l-1.6 -1.4z" fill="#c2c2c8" stroke="#4c4c4c" stroke-width="1"/>
<path d="M1590.7 506h1.4v27l-1.4 -1z" fill="#8b8c86"/>
<path d="M1653.5 460h3v20l-1.5 1.4l-1.5 -1.4z" fill="#c2c2c8" stroke="#4c4c4c" stroke-width="1"/>
<path d="M1653.8 460h1.4v20.9l-1.4 -0.9z" fill="#8b8c86"/>
<path d="M1646.4 465.9h3.1v21l-1.6 1.4l-1.6 -1.4z" fill="#c2c2c8" stroke="#4c4c4c" stroke-width="1"/>
<path d="M1646.7 465.9h1.4v22l-1.4 -0.9z" fill="#8b8c86"/>
<path d="M1638.3 472.6h3.3v22.2l-1.7 1.5l-1.7 -1.5z" fill="#c2c2c8" stroke="#4c4c4c" stroke-width="1"/>
<path d="M1638.6 472.6h1.5v23.2l-1.5 -1z" fill="#8b8c86"/>
<path d="M1629.8 479.7h3.5v23.4l-1.7 1.6l-1.7 -1.6z" fill="#c2c2c8" stroke="#4c4c4c" stroke-width="1"/>
<path d="M1630.1 479.7h1.6v24.4l-1.6 -1z" fill="#8b8c86"/>
<path d="M1621 487.1h3.7v24.7l-1.8 1.6l-1.8 -1.6z" fill="#c2c2c8" stroke="#4c4c4c" stroke-width="1"/>
<path d="M1621.3 487.1h1.6v25.8l-1.6 -1.1z" fill="#8b8c86"/>
<path d="M1611.9 494.6h3.8v26l-1.9 1.7l-1.9 -1.7z" fill="#c2c2c8" stroke="#4c4c4c" stroke-width="1"/>
<path d="M1612.2 494.6h1.7v27.1l-1.7 -1.2z" fill="#8b8c86"/>
<path d="M1602.7 502.3h4v27.3l-2 1.8l-2 -1.8z" fill="#c2c2c8" stroke="#4c4c4c" stroke-width="1"/>
<path d="M1603 502.3h1.8v28.5l-1.8 -1.2z" fill="#8b8c86"/>
<path d="M1593.3 510.1h4.2v28.6l-2.1 1.9l-2.1 -1.9z" fill="#c2c2c8" stroke="#4c4c4c" stroke-width="1"/>
<path d="M1593.6 510.1h1.9v29.9l-1.9 -1.3z" fill="#8b8c86"/>
<path d="M1583.8 518h4.4v30l-2.2 2l-2.2 -2z" fill="#c2c2c8" stroke="#4c4c4c" stroke-width="1"/>
<path d="M1584.1 518h2v31.3l-2 -1.3z" fill="#8b8c86"/>
</g>
<path d="M1077.5 477.5L1402.5 651L1402.5 654.5L1078.5 480.5z" fill="#86b0ab" stroke="#5c6262" stroke-width="0.8"/>
<path d="M1402.5 651L1534 555L1534 558.5L1402.5 654.5z" fill="#86b0ab" stroke="#5c6262" stroke-width="0.8"/>
<path d="M1581 512.5L1656 452L1658 455L1582 517z" fill="#7fb3ad" stroke="#5c6262" stroke-width="0.8"/>
<path d="M1070 470L1079 487L1401 661L1536 564" fill="none" stroke="#606364" stroke-width="1.4"/>
<path d="M1580 521L1665 457" fill="none" stroke="#606364" stroke-width="1.4"/>
<path d="M1064 362.5L1355 298L1489 319L1531 306L1652.5 323.8L1407 483z" fill="#7d8097"/>
<path d="M1064 362.5L1355 298L1355 306L1096 370z" fill="#b35d41" stroke="#55595c" stroke-width="0.6"/>
<path d="M1355 298L1489 319L1489 327L1357 306z" fill="#8b482e" stroke="#55595c" stroke-width="0.6"/>
<clipPath id="cl1"><path d="M1098 371L1355 307L1489 328L1531 330L1531 470L1404 478L1075 366z"/></clipPath><g clip-path="url(#cl1)">
<path d="M1079.7 347.6L1507.3 482.8" fill="none" stroke="#50545a" stroke-width="0.8"/>
<path d="M1079.7 347.6L1507.3 482.8" fill="none" stroke="#24282d" stroke-width="1.7" stroke-dasharray="0.1 7" stroke-linecap="round"/>
<path d="M1127 337.5L1559 456.9" fill="none" stroke="#50545a" stroke-width="0.8"/>
<path d="M1127 337.5L1559 456.9" fill="none" stroke="#24282d" stroke-width="1.7" stroke-dasharray="0.1 7" stroke-linecap="round"/>
<path d="M1176.9 326.9L1610.4 431.3" fill="none" stroke="#50545a" stroke-width="0.8"/>
<path d="M1176.9 326.9L1610.4 431.3" fill="none" stroke="#24282d" stroke-width="1.7" stroke-dasharray="0.1 7" stroke-linecap="round"/>
<path d="M1219.8 317.8L1652.5 410.3" fill="none" stroke="#50545a" stroke-width="0.8"/>
<path d="M1219.8 317.8L1652.5 410.3" fill="none" stroke="#24282d" stroke-width="1.7" stroke-dasharray="0.1 7" stroke-linecap="round"/>
<path d="M1259.6 309.4L1689.7 391.7" fill="none" stroke="#50545a" stroke-width="0.8"/>
<path d="M1259.6 309.4L1689.7 391.7" fill="none" stroke="#24282d" stroke-width="1.7" stroke-dasharray="0.1 7" stroke-linecap="round"/>
<path d="M1299 301L1724.8 374.1" fill="none" stroke="#50545a" stroke-width="0.8"/>
<path d="M1299 301L1724.8 374.1" fill="none" stroke="#24282d" stroke-width="1.7" stroke-dasharray="0.1 7" stroke-linecap="round"/>
<path d="M1043.8 378.8L1399.5 296.6" fill="none" stroke="#50545a" stroke-width="0.8"/>
<path d="M1043.8 378.8L1399.5 296.6" fill="none" stroke="#24282d" stroke-width="1.7" stroke-dasharray="0.1 7" stroke-linecap="round"/>
<path d="M1074 390.7L1434.7 301.7" fill="none" stroke="#50545a" stroke-width="0.8"/>
<path d="M1074 390.7L1434.7 301.7" fill="none" stroke="#24282d" stroke-width="1.7" stroke-dasharray="0.1 7" stroke-linecap="round"/>
<path d="M1110.6 405.1L1475.8 307.8" fill="none" stroke="#50545a" stroke-width="0.8"/>
<path d="M1110.6 405.1L1475.8 307.8" fill="none" stroke="#24282d" stroke-width="1.7" stroke-dasharray="0.1 7" stroke-linecap="round"/>
<path d="M1152 421.4L1520.6 314.4" fill="none" stroke="#50545a" stroke-width="0.8"/>
<path d="M1152 421.4L1520.6 314.4" fill="none" stroke="#24282d" stroke-width="1.7" stroke-dasharray="0.1 7" stroke-linecap="round"/>
<path d="M1195.9 438.7L1566 321.1" fill="none" stroke="#50545a" stroke-width="0.8"/>
<path d="M1195.9 438.7L1566 321.1" fill="none" stroke="#24282d" stroke-width="1.7" stroke-dasharray="0.1 7" stroke-linecap="round"/>
<path d="M1246.1 458.5L1615.7 328.5" fill="none" stroke="#50545a" stroke-width="0.8"/>
<path d="M1246.1 458.5L1615.7 328.5" fill="none" stroke="#24282d" stroke-width="1.7" stroke-dasharray="0.1 7" stroke-linecap="round"/>
<path d="M1308.9 483.2L1674.7 337.2" fill="none" stroke="#50545a" stroke-width="0.8"/>
<path d="M1308.9 483.2L1674.7 337.2" fill="none" stroke="#24282d" stroke-width="1.7" stroke-dasharray="0.1 7" stroke-linecap="round"/>
</g>
<path d="M1368 327.5L1452 341L1452 366L1368 356z" fill="#b9b09b"/>
<path d="M1368 327.5L1377.4 329L1377.4 357.1L1368 356z" fill="#e8ded7"/>
<path d="M1381 331.3L1385.6 332L1385.6 358.1L1381 357.5z" fill="#1e2425"/>
<path d="M1381 346.4L1385.6 347L1385.6 350.3L1381 349.7z" fill="#8d969c"/>
<path d="M1390.5 332.8L1395.1 333.5L1395.1 359.2L1390.5 358.7z" fill="#1e2425"/>
<path d="M1390.5 347.7L1395.1 348.3L1395.1 351.6L1390.5 351z" fill="#8d969c"/>
<path d="M1400 334.3L1404.6 335L1404.6 360.4L1400 359.8z" fill="#1e2425"/>
<path d="M1400 348.9L1404.6 349.6L1404.6 352.8L1400 352.2z" fill="#8d969c"/>
<path d="M1409.5 335.8L1414.1 336.5L1414.1 361.5L1409.5 360.9z" fill="#1e2425"/>
<path d="M1409.5 350.2L1414.1 350.9L1414.1 354L1409.5 353.4z" fill="#8d969c"/>
<path d="M1419 337.3L1423.6 338L1423.6 362.6L1419 362.1z" fill="#1e2425"/>
<path d="M1419 351.5L1423.6 352.1L1423.6 355.3L1419 354.7z" fill="#8d969c"/>
<path d="M1428.5 338.8L1433.1 339.5L1433.1 363.7L1428.5 363.2z" fill="#1e2425"/>
<path d="M1428.5 352.8L1433.1 353.4L1433.1 356.5L1428.5 355.9z" fill="#8d969c"/>
<path d="M1438 340.3L1442.6 341L1442.6 364.9L1438 364.3z" fill="#1e2425"/>
<path d="M1438 354.1L1442.6 354.7L1442.6 357.8L1438 357.2z" fill="#8d969c"/>
<path d="M1447.5 341.8L1452 342.5L1452 366L1447.5 365.5z" fill="#1e2425"/>
<path d="M1447.5 355.4L1452 356L1452 359L1447.5 358.4z" fill="#8d969c"/>
<path d="M1250 358.5L1332 339L1333 367L1252 377z" fill="#e9dfd6"/>
<path d="M1255.1 358.3L1261.1 356.9L1263 375.6L1257 376.4z" fill="#2b2f35"/>
<path d="M1256.2 368.5L1262.2 367.4L1262.3 369L1256.3 370z" fill="#8d969c"/>
<path d="M1257.1 371L1259.1 370.7L1259.6 376.1L1257.7 376.3z" fill="#94a2af"/>
<path d="M1259.9 370.6L1261.8 370.3L1262.3 375.7L1260.4 376z" fill="#94a2af"/>
<path d="M1264.6 356.1L1271.5 354.5L1273.2 374.4L1266.5 375.2z" fill="#2b2f35"/>
<path d="M1265.7 366.8L1272.4 365.7L1272.6 367.3L1265.8 368.4z" fill="#8d969c"/>
<path d="M1266.7 369.5L1268.9 369.2L1269.4 374.8L1267.2 375.1z" fill="#94a2af"/>
<path d="M1269.8 369L1272 368.7L1272.5 374.5L1270.3 374.7z" fill="#94a2af"/>
<path d="M1275.8 353.5L1281.7 352.1L1283.4 373.1L1277.5 373.9z" fill="#2b2f35"/>
<path d="M1276.7 364.9L1282.6 363.9L1282.8 365.7L1276.9 366.6z" fill="#8d969c"/>
<path d="M1277.7 367.8L1279.6 367.5L1280.1 373.5L1278.2 373.8z" fill="#94a2af"/>
<path d="M1280.4 367.4L1282.3 367.1L1282.8 373.2L1280.9 373.4z" fill="#94a2af"/>
<path d="M1288.2 350.6L1299.3 348L1300.8 371L1289.8 372.3z" fill="#2b2f35"/>
<path d="M1289.1 362.8L1300.1 360.9L1300.2 362.9L1289.3 364.6z" fill="#8d969c"/>
<path d="M1290.6 365.8L1294.2 365.3L1294.6 371.7L1291.1 372.2z" fill="#94a2af"/>
<path d="M1295.6 365L1299.2 364.5L1299.6 371.1L1296 371.6z" fill="#94a2af"/>
<path d="M1303.8 347L1314.4 344.5L1315.7 369.1L1305.2 370.4z" fill="#2b2f35"/>
<path d="M1304.6 360.2L1315.1 358.4L1315.2 360.5L1304.7 362.1z" fill="#8d969c"/>
<path d="M1306 363.4L1309.4 362.9L1309.8 369.9L1306.4 370.3z" fill="#94a2af"/>
<path d="M1310.8 362.7L1314.2 362.2L1314.6 369.3L1311.2 369.7z" fill="#94a2af"/>
<path d="M1318.4 343.6L1328.5 341.3L1329.5 367.4L1319.6 368.7z" fill="#2b2f35"/>
<path d="M1319.1 357.7L1329.1 356L1329.2 358.2L1319.2 359.8z" fill="#8d969c"/>
<path d="M1320.4 361.2L1323.7 360.7L1324 368.1L1320.8 368.5z" fill="#94a2af"/>
<path d="M1324.9 360.5L1328.2 360L1328.5 367.6L1325.3 368z" fill="#94a2af"/>
<path d="M1304 317L1347 324L1347 362L1333 366L1332 338.5L1304 345z" fill="#8b492e" stroke="#55595c" stroke-width="0.5"/>
<path d="M1347 324L1367.5 320L1367.5 356L1347 362z" fill="#b05a3a" stroke="#55595c" stroke-width="0.5"/>
<path d="M1351 329L1363 326.5L1363 354L1351 357.5z" fill="#1c1f22"/>
<path d="M1352.2 330.5L1361.8 328.5L1361.8 341L1352.2 343.5z" fill="#b89a98"/>
<path d="M1352.2 345L1361.8 342.5L1361.8 353L1352.2 355.5z" fill="#a9b3bd"/>
<path d="M1304 317L1323.5 312L1367.5 320L1347 324z" fill="#8b492e" stroke="#55595c" stroke-width="0.6"/>
<path d="M1309 317.3L1324 313.6L1361 320.2L1346.5 322.8z" fill="#7d8097"/>
<path d="M1304 332L1314 331L1314 345L1304 346z" fill="#c9a79f" stroke="#9a8a88" stroke-width="0.5" opacity="0.8"/>
<path d="M1250.5 358.5L1314 374L1314 390L1256.5 371.5z" fill="#b9af96" stroke="#6f6f68" stroke-width="0.6"/>
<path d="M1313.8 373.8L1380 354L1391 352.7L1415.6 357.5L1520.5 323L1489 319L1531 306L1652.5 323.8L1456.2 410z" fill="#7d8097" stroke="#55595c" stroke-width="0.6"/>
<path d="M1313.8 373.8L1380 354L1380 364L1340 376z" fill="#b35d41" stroke="#55595c" stroke-width="0.5"/>
<path d="M1391 352.7L1415.6 357.5L1416 369L1391 363z" fill="#8b482e" stroke="#55595c" stroke-width="0.5"/>
<path d="M1415.6 357.5L1520.5 323L1520.5 334L1416 369z" fill="#b35d41" stroke="#55595c" stroke-width="0.5"/>
<path d="M1489 319L1520.5 323L1520.5 334L1489 329z" fill="#8b482e" stroke="#55595c" stroke-width="0.5"/>
<path d="M1489 319L1531 306L1531 313L1494 325z" fill="#b35d41" stroke="#55595c" stroke-width="0.5"/>
<path d="M1531 306L1652.5 323.8L1646 328L1534 312.5z" fill="#8b482e" stroke="#55595c" stroke-width="0.5"/>
<clipPath id="cl2"><path d="M1342 377L1380 365L1392 364L1416 370L1520.5 335L1494 326L1531 314L1645 329L1456 406z"/></clipPath><g clip-path="url(#cl2)">
<path d="M1345.1 358.1L1511.8 396.4" fill="none" stroke="#50545a" stroke-width="0.8"/>
<path d="M1345.1 358.1L1511.8 396.4" fill="none" stroke="#24282d" stroke-width="1.7" stroke-dasharray="0.1 7" stroke-linecap="round"/>
<path d="M1403.7 341.2L1562.7 372.9" fill="none" stroke="#50545a" stroke-width="0.8"/>
<path d="M1403.7 341.2L1562.7 372.9" fill="none" stroke="#24282d" stroke-width="1.7" stroke-dasharray="0.1 7" stroke-linecap="round"/>
<path d="M1452.8 327L1604.1 353.8" fill="none" stroke="#50545a" stroke-width="0.8"/>
<path d="M1452.8 327L1604.1 353.8" fill="none" stroke="#24282d" stroke-width="1.7" stroke-dasharray="0.1 7" stroke-linecap="round"/>
<path d="M1494.6 315L1638.6 337.9" fill="none" stroke="#50545a" stroke-width="0.8"/>
<path d="M1494.6 315L1638.6 337.9" fill="none" stroke="#24282d" stroke-width="1.7" stroke-dasharray="0.1 7" stroke-linecap="round"/>
<path d="M1307.4 391.9L1575.5 305.8" fill="none" stroke="#50545a" stroke-width="0.8"/>
<path d="M1307.4 391.9L1575.5 305.8" fill="none" stroke="#24282d" stroke-width="1.7" stroke-dasharray="0.1 7" stroke-linecap="round"/>
<path d="M1346.1 402.6L1606.1 310.1" fill="none" stroke="#50545a" stroke-width="0.8"/>
<path d="M1346.1 402.6L1606.1 310.1" fill="none" stroke="#24282d" stroke-width="1.7" stroke-dasharray="0.1 7" stroke-linecap="round"/>
<path d="M1388.3 414.2L1638.2 314.6" fill="none" stroke="#50545a" stroke-width="0.8"/>
<path d="M1388.3 414.2L1638.2 314.6" fill="none" stroke="#24282d" stroke-width="1.7" stroke-dasharray="0.1 7" stroke-linecap="round"/>
</g>
<path d="M1313.8 373.8L1456.2 410L1455 456L1427.7 470.5L1313.8 431.6z" fill="#8b482e" stroke="#55595c" stroke-width="0.6"/>
<path d="M1313.8 390L1456 427.5" fill="none" stroke="#5e3626" stroke-width="0.6"/>
<path d="M1320 375.5L1320 431" fill="none" stroke="#6b3a28" stroke-width="0.5"/>
<path d="M1322 417L1337 418.5L1337 438L1322 436.5z" fill="#d8a79a" stroke="#9c8a86" stroke-width="0.6" opacity="0.75"/>
<path d="M1322 417L1326 415.5L1341 417L1337 418.5z" fill="#d9c3c0" stroke="#9c8a86" stroke-width="0.5" opacity="0.8"/>
<path d="M1352.5 407L1352.5 393.5" fill="none" stroke="#0000ff" stroke-width="1.4"/>
<path d="M1352.5 407L1343.5 410.5" fill="none" stroke="#ff0000" stroke-width="1.4"/>
<path d="M1352.5 407L1363.5 410.5" fill="none" stroke="#00ff00" stroke-width="1.4"/>
<path d="M1064 362.5L1407 483L1403.2 625L1075.4 459.3z" fill="#8f4a2e"/>
<path d="M1071 368.5L1076 370.3L1079.9 404.9L1074.9 402.9z" fill="#1f2425"/>
<path d="M1073.3 384.9L1077.5 386.5L1077.8 389.2L1073.6 387.6z" fill="#878e94"/>
<path d="M1074.4 390.2L1077.4 391.4L1078.6 402.1L1075.7 400.9z" fill="#838b92"/>
<path d="M1075.7 409.1L1080.6 411.2L1083.2 433.7L1078.2 431.5z" fill="#1f2425"/>
<path d="M1076.7 415.2L1080.9 416.9L1081.2 419.4L1077 417.6z" fill="#878e94"/>
<path d="M1077.8 420L1080.8 421.3L1081.9 431L1078.9 429.6z" fill="#838b92"/>
<path d="M1078.9 437.6L1083.8 439.9L1086.3 461.3L1081.4 458.8z" fill="#1f2425"/>
<path d="M1079.9 442.9L1084 444.9L1084.3 447.3L1080.2 445.3z" fill="#878e94"/>
<path d="M1081 447.6L1084 449.1L1085 458.5L1082.1 457.1z" fill="#838b92"/>
<path d="M1080 371.7L1087.5 374.4L1091.3 409.6L1083.9 406.6z" fill="#1f2425"/>
<path d="M1082.4 388.4L1088.7 390.8L1089 393.6L1082.7 391.2z" fill="#878e94"/>
<path d="M1083.9 393.9L1088.4 395.6L1089.5 406.5L1085.1 404.7z" fill="#838b92"/>
<path d="M1084.6 412.9L1092 416L1094.5 438.9L1087.1 435.5z" fill="#1f2425"/>
<path d="M1085.8 419.1L1092.1 421.8L1092.3 424.2L1086.1 421.5z" fill="#878e94"/>
<path d="M1087.2 424.1L1091.7 426L1092.7 435.9L1088.3 433.9z" fill="#838b92"/>
<path d="M1087.8 441.7L1095.2 445.1L1097.5 466.9L1090.2 463.2z" fill="#1f2425"/>
<path d="M1088.9 447.2L1095.1 450.1L1095.4 452.6L1089.2 449.6z" fill="#878e94"/>
<path d="M1090.3 452.1L1094.7 454.3L1095.8 463.9L1091.4 461.7z" fill="#838b92"/>
<path d="M1091 375.6L1096 377.4L1099.7 413.1L1094.8 411z" fill="#1f2425"/>
<path d="M1093.2 392.6L1097.4 394.2L1097.7 396.9L1093.5 395.3z" fill="#878e94"/>
<path d="M1094.3 398L1097.3 399.1L1098.5 410.2L1095.5 409z" fill="#838b92"/>
<path d="M1095.5 417.5L1100.4 419.6L1102.8 442.7L1097.9 440.5z" fill="#1f2425"/>
<path d="M1096.5 423.7L1100.7 425.5L1100.9 428L1096.8 426.2z" fill="#878e94"/>
<path d="M1097.6 428.6L1100.6 429.9L1101.6 439.9L1098.7 438.6z" fill="#838b92"/>
<path d="M1098.6 446.7L1103.5 449L1105.8 471L1100.9 468.6z" fill="#1f2425"/>
<path d="M1099.5 452.2L1103.7 454.2L1103.9 456.6L1099.8 454.7z" fill="#878e94"/>
<path d="M1100.6 457.1L1103.6 458.5L1104.6 468.2L1101.7 466.8z" fill="#838b92"/>
<path d="M1100 378.8L1109 382L1112.6 418.4L1103.7 414.7z" fill="#1f2425"/>
<path d="M1102.5 396.1L1110 399L1110.3 401.8L1102.8 398.9z" fill="#878e94"/>
<path d="M1103.2 401.4L1106.2 402.6L1107.3 413.8L1104.3 412.6z" fill="#838b92"/>
<path d="M1107.3 403L1110.3 404.2L1111.5 415.5L1108.4 414.2z" fill="#838b92"/>
<path d="M1104.4 421.2L1113.3 425L1115.6 448.6L1106.8 444.5z" fill="#1f2425"/>
<path d="M1105.7 427.6L1113.2 430.9L1113.4 433.4L1106 430.2z" fill="#878e94"/>
<path d="M1106.4 432.5L1109.4 433.8L1110.4 443.9L1107.4 442.5z" fill="#838b92"/>
<path d="M1110.4 434.3L1113.5 435.6L1114.5 445.8L1111.5 444.4z" fill="#838b92"/>
<path d="M1107.4 450.9L1116.3 455L1118.5 477.4L1109.7 473z" fill="#1f2425"/>
<path d="M1108.7 456.6L1116.1 460.1L1116.3 462.6L1108.9 459z" fill="#878e94"/>
<path d="M1109.3 461.3L1112.3 462.7L1113.3 472.6L1110.3 471.1z" fill="#838b92"/>
<path d="M1113.4 463.2L1116.4 464.7L1117.4 474.6L1114.4 473.1z" fill="#838b92"/>
<path d="M1114.5 384L1120 386L1123.5 422.9L1118.1 420.6z" fill="#1f2425"/>
<path d="M1116.6 401.5L1121.2 403.3L1121.5 406.2L1116.9 404.4z" fill="#878e94"/>
<path d="M1117.8 407.2L1121.1 408.4L1122.2 419.9L1118.9 418.5z" fill="#838b92"/>
<path d="M1118.7 427.3L1124.1 429.6L1126.4 453.5L1121 451z" fill="#1f2425"/>
<path d="M1119.7 433.7L1124.3 435.7L1124.5 438.3L1120 436.3z" fill="#878e94"/>
<path d="M1120.9 438.8L1124.1 440.3L1125.1 450.6L1121.9 449.1z" fill="#838b92"/>
<path d="M1121.6 457.5L1127 460L1129.2 482.7L1123.8 480.1z" fill="#1f2425"/>
<path d="M1122.6 463.2L1127.1 465.3L1127.4 467.9L1122.9 465.7z" fill="#878e94"/>
<path d="M1123.7 468.2L1126.9 469.8L1127.9 479.8L1124.7 478.2z" fill="#838b92"/>
<path d="M1124 387.4L1130 389.5L1133.4 427L1127.5 424.5z" fill="#1f2425"/>
<path d="M1126.1 405.2L1131.1 407.1L1131.4 410L1126.4 408.1z" fill="#878e94"/>
<path d="M1127.3 410.9L1130.9 412.3L1132 423.9L1128.4 422.4z" fill="#838b92"/>
<path d="M1128.1 431.2L1134 433.7L1136.2 458L1130.3 455.3z" fill="#1f2425"/>
<path d="M1129.2 437.8L1134.1 439.9L1134.4 442.5L1129.4 440.4z" fill="#878e94"/>
<path d="M1130.3 443L1133.9 444.5L1134.8 455L1131.3 453.4z" fill="#838b92"/>
<path d="M1131 461.8L1136.8 464.6L1138.9 487.6L1133.1 484.7z" fill="#1f2425"/>
<path d="M1131.9 467.6L1136.9 469.9L1137.1 472.5L1132.2 470.2z" fill="#878e94"/>
<path d="M1133.1 472.7L1136.6 474.4L1137.5 484.6L1134 482.9z" fill="#838b92"/>
<path d="M1134 391L1144 394.5L1147.2 432.7L1137.4 428.6z" fill="#1f2425"/>
<path d="M1136.4 409.1L1144.7 412.3L1145 415.3L1136.6 412.1z" fill="#878e94"/>
<path d="M1137.1 414.7L1140.4 416L1141.4 427.7L1138.1 426.4z" fill="#838b92"/>
<path d="M1141.6 416.5L1145 417.8L1146 429.6L1142.6 428.2z" fill="#838b92"/>
<path d="M1138 435.4L1147.8 439.6L1149.9 464.3L1140.1 459.8z" fill="#1f2425"/>
<path d="M1139.3 442.1L1147.6 445.7L1147.8 448.4L1139.6 444.8z" fill="#878e94"/>
<path d="M1140 447.2L1143.3 448.7L1144.2 459.2L1140.9 457.7z" fill="#838b92"/>
<path d="M1144.5 449.2L1147.8 450.6L1148.7 461.3L1145.4 459.8z" fill="#838b92"/>
<path d="M1140.7 466.4L1150.5 471L1152.5 494.4L1142.8 489.5z" fill="#1f2425"/>
<path d="M1142 472.4L1150.2 476.3L1150.4 478.9L1142.2 475z" fill="#878e94"/>
<path d="M1142.6 477.3L1145.9 478.9L1146.8 489.2L1143.5 487.6z" fill="#838b92"/>
<path d="M1147.1 479.5L1150.4 481.1L1151.3 491.4L1148 489.8z" fill="#838b92"/>
<path d="M1152.5 397.6L1164 401.7L1167 440.8L1155.7 436.1z" fill="#1f2425"/>
<path d="M1154.9 416.2L1164.5 419.9L1164.7 422.9L1155.1 419.2z" fill="#878e94"/>
<path d="M1155.6 421.9L1159.4 423.4L1160.4 435.5L1156.6 433.9z" fill="#838b92"/>
<path d="M1160.8 424L1164.7 425.5L1165.6 437.6L1161.8 436z" fill="#838b92"/>
<path d="M1156.2 443.1L1167.6 447.9L1169.5 473.2L1158.3 468.1z" fill="#1f2425"/>
<path d="M1157.6 450L1167.2 454.1L1167.4 456.9L1157.9 452.8z" fill="#878e94"/>
<path d="M1158.3 455.2L1162.1 456.9L1163 467.7L1159.2 466z" fill="#838b92"/>
<path d="M1163.5 457.5L1167.3 459.2L1168.2 470.1L1164.3 468.3z" fill="#838b92"/>
<path d="M1158.8 474.9L1170 480.1L1171.9 504.1L1160.7 498.5z" fill="#1f2425"/>
<path d="M1160.2 481L1169.6 485.5L1169.8 488.1L1160.4 483.7z" fill="#878e94"/>
<path d="M1160.8 486.1L1164.6 487.9L1165.4 498.4L1161.6 496.6z" fill="#838b92"/>
<path d="M1165.9 488.5L1169.7 490.4L1170.6 501L1166.7 499.1z" fill="#838b92"/>
<path d="M1169 403.5L1180 407.4L1182.8 447.3L1172 442.8z" fill="#1f2425"/>
<path d="M1171.3 422.5L1180.4 426L1180.7 429.1L1171.5 425.6z" fill="#878e94"/>
<path d="M1171.9 428.3L1175.6 429.8L1176.5 442L1172.8 440.5z" fill="#838b92"/>
<path d="M1176.9 430.3L1180.6 431.7L1181.5 444.1L1177.8 442.6z" fill="#838b92"/>
<path d="M1172.5 450L1183.3 454.5L1185.1 480.3L1174.4 475.4z" fill="#1f2425"/>
<path d="M1173.8 457L1182.9 460.9L1183.1 463.7L1174 459.8z" fill="#878e94"/>
<path d="M1174.4 462.3L1178.1 463.9L1178.9 475L1175.3 473.3z" fill="#838b92"/>
<path d="M1179.4 464.5L1183.1 466.1L1183.9 477.2L1180.2 475.5z" fill="#838b92"/>
<path d="M1174.9 482.4L1185.6 487.4L1187.3 511.8L1176.7 506.5z" fill="#1f2425"/>
<path d="M1176.2 488.6L1185.2 492.9L1185.4 495.6L1176.4 491.3z" fill="#878e94"/>
<path d="M1176.8 493.8L1180.4 495.5L1181.2 506.3L1177.6 504.5z" fill="#838b92"/>
<path d="M1181.7 496.1L1185.3 497.9L1186.1 508.7L1182.4 506.9z" fill="#838b92"/>
<path d="M1185 409.2L1196 413.1L1198.6 453.8L1187.7 449.4z" fill="#1f2425"/>
<path d="M1187.2 428.6L1196.3 432.1L1196.5 435.3L1187.4 431.7z" fill="#878e94"/>
<path d="M1187.8 434.5L1191.5 436L1192.3 448.5L1188.6 447z" fill="#838b92"/>
<path d="M1192.8 436.5L1196.5 438L1197.3 450.5L1193.6 449z" fill="#838b92"/>
<path d="M1188.2 456.6L1199.1 461.2L1200.7 487.5L1190 482.6z" fill="#1f2425"/>
<path d="M1189.6 463.8L1198.6 467.7L1198.8 470.6L1189.8 466.6z" fill="#878e94"/>
<path d="M1190.1 469.2L1193.8 470.8L1194.5 482L1190.9 480.4z" fill="#838b92"/>
<path d="M1195.1 471.4L1198.8 473L1199.5 484.3L1195.8 482.6z" fill="#838b92"/>
<path d="M1190.5 489.6L1201.2 494.6L1202.8 519.5L1192.2 514.2z" fill="#1f2425"/>
<path d="M1191.7 496L1200.7 500.3L1200.9 503L1191.9 498.7z" fill="#878e94"/>
<path d="M1192.3 501.2L1195.9 503L1196.6 513.9L1193 512.1z" fill="#838b92"/>
<path d="M1197.2 503.6L1200.8 505.4L1201.5 516.4L1197.9 514.6z" fill="#838b92"/>
<path d="M1201 414.9L1214 419.5L1216.3 461.1L1203.5 455.9z" fill="#1f2425"/>
<path d="M1203.2 434.7L1214.1 438.9L1214.2 442.1L1203.4 437.9z" fill="#878e94"/>
<path d="M1203.8 440.8L1208.2 442.5L1208.9 455.3L1204.6 453.5z" fill="#838b92"/>
<path d="M1209.7 443.1L1214.1 444.9L1214.9 457.7L1210.5 455.9z" fill="#838b92"/>
<path d="M1204 463.3L1216.8 468.7L1218.3 495.5L1205.6 489.7z" fill="#1f2425"/>
<path d="M1205.4 470.6L1216.1 475.3L1216.3 478.2L1205.6 473.5z" fill="#878e94"/>
<path d="M1206 476.1L1210.3 478L1211 489.5L1206.7 487.6z" fill="#838b92"/>
<path d="M1211.8 478.7L1216.2 480.6L1216.8 492.2L1212.5 490.2z" fill="#838b92"/>
<path d="M1206.1 496.9L1218.7 502.8L1220.1 528.2L1207.6 521.9z" fill="#1f2425"/>
<path d="M1207.4 503.4L1218 508.5L1218.2 511.3L1207.6 506.2z" fill="#878e94"/>
<path d="M1208 508.8L1212.2 510.8L1212.9 522L1208.7 519.9z" fill="#838b92"/>
<path d="M1213.7 511.6L1218.1 513.6L1218.7 524.9L1214.4 522.7z" fill="#838b92"/>
<path d="M1220 421.7L1225 423.5L1227.2 465.6L1222.3 463.6z" fill="#1f2425"/>
<path d="M1221.5 441.7L1225.6 443.3L1225.8 446.6L1221.6 445z" fill="#878e94"/>
<path d="M1222.4 448.1L1225.4 449.2L1226 462.3L1223.1 461z" fill="#838b92"/>
<path d="M1222.7 471.1L1227.6 473.2L1229 500.4L1224.1 498.2z" fill="#1f2425"/>
<path d="M1223.4 478.4L1227.5 480.2L1227.7 483.1L1223.6 481.3z" fill="#878e94"/>
<path d="M1224.3 484.2L1227.2 485.5L1227.9 497.2L1224.9 495.8z" fill="#838b92"/>
<path d="M1224.5 505.5L1229.4 507.8L1230.7 533.4L1225.9 531z" fill="#1f2425"/>
<path d="M1225.2 511.9L1229.3 513.8L1229.4 516.7L1225.4 514.7z" fill="#878e94"/>
<path d="M1226.1 517.5L1229 518.9L1229.6 530.3L1226.7 528.8z" fill="#838b92"/>
<path d="M1235 427L1250 432.4L1251.8 475.7L1237 469.7z" fill="#1f2425"/>
<path d="M1237.1 447.7L1249.6 452.5L1249.8 455.9L1237.3 451.1z" fill="#878e94"/>
<path d="M1237.7 454.1L1242.7 456L1243.3 469.3L1238.3 467.3z" fill="#838b92"/>
<path d="M1244.5 456.7L1249.6 458.7L1250.2 472.1L1245.1 470z" fill="#838b92"/>
<path d="M1237.4 477.4L1252.1 483.6L1253.3 511.5L1238.7 504.8z" fill="#1f2425"/>
<path d="M1238.9 485.1L1251.2 490.4L1251.3 493.4L1239 488.1z" fill="#878e94"/>
<path d="M1239.4 490.8L1244.4 493L1244.9 504.9L1240 502.7z" fill="#838b92"/>
<path d="M1246.1 493.7L1251.2 495.9L1251.7 508L1246.7 505.7z" fill="#838b92"/>
<path d="M1239 512.3L1253.6 519.1L1254.6 545.4L1240.3 538.2z" fill="#1f2425"/>
<path d="M1240.5 519.1L1252.6 524.9L1252.8 527.8L1240.6 522z" fill="#878e94"/>
<path d="M1241 524.7L1245.9 527.1L1246.4 538.6L1241.6 536.2z" fill="#838b92"/>
<path d="M1247.6 527.9L1252.6 530.3L1253.1 541.9L1248.1 539.5z" fill="#838b92"/>
<path d="M1259 435.6L1272 440.3L1273.4 484.7L1260.6 479.4z" fill="#1f2425"/>
<path d="M1260.8 456.8L1271.6 461L1271.7 464.4L1260.9 460.2z" fill="#878e94"/>
<path d="M1261.3 463.3L1265.6 465L1266.1 478.6L1261.8 476.8z" fill="#838b92"/>
<path d="M1267.2 465.6L1271.6 467.3L1272 481L1267.6 479.2z" fill="#838b92"/>
<path d="M1260.9 487.3L1273.7 492.7L1274.6 521.2L1262 515.5z" fill="#1f2425"/>
<path d="M1262.2 495.1L1272.9 499.7L1273 502.8L1262.3 498.2z" fill="#878e94"/>
<path d="M1262.7 501L1266.9 502.9L1267.4 515.1L1263.1 513.2z" fill="#838b92"/>
<path d="M1268.5 503.5L1272.8 505.4L1273.2 517.7L1268.9 515.8z" fill="#838b92"/>
<path d="M1262.3 523.1L1274.8 529L1275.7 555.9L1263.3 549.7z" fill="#1f2425"/>
<path d="M1263.5 530.1L1274 535L1274.1 538.1L1263.6 533z" fill="#878e94"/>
<path d="M1263.9 535.7L1268.2 537.8L1268.6 549.6L1264.4 547.5z" fill="#838b92"/>
<path d="M1269.7 538.5L1273.9 540.6L1274.3 552.5L1270.1 550.4z" fill="#838b92"/>
<path d="M1278 442.4L1293 447.8L1294 493.2L1279.3 487.1z" fill="#1f2425"/>
<path d="M1279.8 464.1L1292.3 468.9L1292.4 472.4L1279.9 467.6z" fill="#878e94"/>
<path d="M1280.3 470.7L1285.3 472.7L1285.6 486.6L1280.7 484.6z" fill="#838b92"/>
<path d="M1287.1 473.4L1292.1 475.4L1292.5 489.4L1287.4 487.3z" fill="#838b92"/>
<path d="M1279.5 495.1L1294.2 501.3L1294.9 530.5L1280.4 523.9z" fill="#1f2425"/>
<path d="M1280.9 503.2L1293.2 508.5L1293.3 511.7L1281 506.3z" fill="#878e94"/>
<path d="M1281.4 509.2L1286.3 511.3L1286.6 523.8L1281.7 521.6z" fill="#838b92"/>
<path d="M1288 512.1L1293.1 514.3L1293.3 526.9L1288.4 524.6z" fill="#838b92"/>
<path d="M1280.6 531.7L1295.1 538.4L1295.7 565.9L1281.4 558.8z" fill="#1f2425"/>
<path d="M1281.9 538.8L1294.1 544.6L1294.1 547.6L1282 541.8z" fill="#878e94"/>
<path d="M1282.4 544.6L1287.2 547L1287.6 559.1L1282.7 556.7z" fill="#838b92"/>
<path d="M1289 547.8L1293.9 550.2L1294.2 562.3L1289.3 559.9z" fill="#838b92"/>
<path d="M1301 450.6L1308.5 453.3L1309.2 499.4L1301.9 496.4z" fill="#1f2425"/>
<path d="M1302 472.6L1308.3 475L1308.3 478.6L1302.1 476.2z" fill="#878e94"/>
<path d="M1303 479.6L1307.5 481.4L1307.7 495.6L1303.3 493.8z" fill="#838b92"/>
<path d="M1302 504.6L1309.4 507.7L1309.9 537.4L1302.6 534z" fill="#1f2425"/>
<path d="M1302.8 512.6L1308.9 515.3L1309 518.5L1302.8 515.8z" fill="#878e94"/>
<path d="M1303.8 519L1308.1 520.9L1308.4 533.7L1304 531.7z" fill="#838b92"/>
<path d="M1302.8 542L1310 545.4L1310.4 573.3L1303.3 569.7z" fill="#1f2425"/>
<path d="M1303.5 549L1309.5 551.9L1309.6 555L1303.5 552.1z" fill="#878e94"/>
<path d="M1304.4 555.3L1308.7 557.3L1309 569.7L1304.7 567.5z" fill="#838b92"/>
<path d="M1315 455.6L1331 461.3L1331.3 508.5L1315.6 502z" fill="#1f2425"/>
<path d="M1316.5 478.2L1329.9 483.3L1329.9 486.9L1316.6 481.8z" fill="#878e94"/>
<path d="M1316.9 485.1L1322.3 487.2L1322.4 501.6L1317.1 499.4z" fill="#838b92"/>
<path d="M1324.2 487.9L1329.6 490L1329.7 504.6L1324.3 502.4z" fill="#838b92"/>
<path d="M1315.7 510.4L1331.4 517L1331.6 547.3L1316.1 540.2z" fill="#1f2425"/>
<path d="M1317.1 518.8L1330.1 524.4L1330.2 527.7L1317.1 522z" fill="#878e94"/>
<path d="M1317.4 525L1322.7 527.3L1322.8 540.2L1317.6 537.9z" fill="#838b92"/>
<path d="M1324.5 528.1L1329.9 530.4L1330 543.5L1324.7 541.1z" fill="#838b92"/>
<path d="M1316.2 548.3L1331.6 555.5L1331.8 588.9L1316.7 581.3z" fill="#1f2425"/>
<path d="M1352.4 469L1369 474.9L1368.5 523.8L1352.3 517.1z" fill="#1f2425"/>
<path d="M1353.6 492.4L1367.4 497.7L1367.4 501.5L1353.6 496.1z" fill="#878e94"/>
<path d="M1353.9 499.6L1359.4 501.7L1359.4 516.7L1353.9 514.4z" fill="#838b92"/>
<path d="M1361.4 502.5L1367 504.7L1366.9 519.8L1361.3 517.5z" fill="#838b92"/>
<path d="M1352.2 525.8L1368.4 532.6L1368.1 564L1352.2 556.7z" fill="#1f2425"/>
<path d="M1353.5 534.5L1367 540.3L1367 543.7L1353.5 537.9z" fill="#878e94"/>
<path d="M1353.8 540.9L1359.2 543.3L1359.1 556.7L1353.7 554.3z" fill="#838b92"/>
<path d="M1361.1 544.1L1366.6 546.6L1366.5 560.1L1361 557.6z" fill="#838b92"/>
<path d="M1352.1 565.1L1368 572.5L1367.7 601.9L1352 594.1z" fill="#1f2425"/>
<path d="M1353.4 572.7L1366.7 579L1366.6 582.3L1353.3 576z" fill="#878e94"/>
<path d="M1353.6 578.9L1359 581.5L1358.9 594.5L1353.6 591.8z" fill="#838b92"/>
<path d="M1360.9 582.4L1366.3 585L1366.2 598.1L1360.8 595.4z" fill="#838b92"/>
<path d="M1378 478.1L1386.7 481.2L1385.8 531L1377.3 527.5z" fill="#1f2425"/>
<path d="M1378.4 501.9L1385.6 504.6L1385.5 508.5L1378.3 505.7z" fill="#878e94"/>
<path d="M1378.4 509.1L1381.3 510.3L1381.1 525.5L1378.2 524.4z" fill="#838b92"/>
<path d="M1382.4 510.7L1385.3 511.8L1385 527.2L1382.1 526z" fill="#838b92"/>
<path d="M1377.2 536.3L1385.7 539.9L1385.1 571.7L1376.7 567.9z" fill="#1f2425"/>
<path d="M1377.7 544.9L1384.8 548L1384.8 551.5L1377.7 548.4z" fill="#878e94"/>
<path d="M1377.8 551.5L1380.7 552.7L1380.4 566.4L1377.6 565.1z" fill="#838b92"/>
<path d="M1381.7 553.1L1384.5 554.4L1384.3 568.1L1381.4 566.8z" fill="#838b92"/>
<path d="M1376.6 576.5L1384.9 580.4L1384.4 610.3L1376.2 606.2z" fill="#1f2425"/>
<path d="M1377.2 584L1384.1 587.3L1384.1 590.7L1377.1 587.3z" fill="#878e94"/>
<path d="M1377.2 590.3L1380 591.7L1379.8 604.8L1377.1 603.5z" fill="#838b92"/>
<path d="M1381 592.1L1383.9 593.5L1383.6 606.7L1380.8 605.3z" fill="#838b92"/>
<path d="M1068.5 400.5L1405.5 539.6L1405.3 546.5L1069 405.2z" fill="#a6a8a2"/>
<path d="M1071.9 429.4L1404.4 581.9L1404.2 587.7L1072.3 433.4z" fill="#a6a8a2"/>
<path d="M1075.4 459.3L1403.2 625L1402.5 651L1077.5 477.5z" fill="#1f2325"/>
<path d="M1064 362.5L1407 483L1406.9 487L1064.3 365.2z" fill="#6e3c26"/>
<path d="M1146.9 391.6L1156 500.7" fill="none" stroke="#8c8c8c" stroke-width="0.8"/>
<path d="M1238.2 423.7L1243.8 545.1" fill="none" stroke="#8c8c8c" stroke-width="0.8"/>
<path d="M1393.6 478.3L1390.7 619.5" fill="none" stroke="#8c8c8c" stroke-width="0.8"/>
<path d="M1110 440L1128 447L1128 452L1110 445z" fill="#2a2b2d"/>
<path d="M1104 487L1120 476L1134 480L1118 492z" fill="#9a9da0" stroke="#666" stroke-width="0.5"/>
<path d="M1064 362.5L1077.5 477.5" fill="none" stroke="#55595c" stroke-width="0.7"/>
<path d="M1407 483L1456 455.5L1456.2 409.8L1652.5 323.8L1652.5 437.5L1403.2 623z" fill="#b35d41"/>
<path d="M1462.9 445.8L1475.3 439.5L1474.4 491.7L1461.8 499.2z" fill="#24282d"/>
<path d="M1463.8 466.8L1473.7 461.4L1473.2 489.6L1463.3 495.5z" fill="#131518"/>
<path d="M1480.3 436.9L1492.8 430.6L1492 481.1L1479.4 488.7z" fill="#24282d"/>
<path d="M1481.2 457.3L1491.3 451.8L1490.8 479L1480.7 485z" fill="#131518"/>
<path d="M1497.8 428.1L1510.3 421.7L1509.6 470.5L1497 478.1z" fill="#24282d"/>
<path d="M1498.7 447.7L1508.8 442.2L1508.5 468.5L1498.2 474.6z" fill="#131518"/>
<path d="M1459.2 514.7L1464.2 511.5L1463.7 538.4L1458.7 541.8z" fill="#24282d"/>
<path d="M1460.1 520L1463.1 518.1L1462.7 537.1L1459.8 539.1z" fill="#8d858c"/>
<path d="M1458.5 553.9L1463.5 550.4L1463 575.5L1458 579.2z" fill="#24282d"/>
<path d="M1459.4 558.2L1462.4 556.1L1462 574.2L1459 576.4z" fill="#8d858c"/>
<path d="M1473.2 505.9L1483.2 499.7L1482.8 525.6L1472.7 532.3z" fill="#24282d"/>
<path d="M1474.1 511.2L1482.2 506L1481.8 524.3L1473.7 529.7z" fill="#8d858c"/>
<path d="M1472.5 544.1L1482.6 537.2L1482.1 561.4L1472.1 568.8z" fill="#24282d"/>
<path d="M1473.4 548.4L1481.5 542.7L1481.2 560.1L1473.1 566.1z" fill="#8d858c"/>
<path d="M1490.7 495L1500.7 488.7L1500.3 513.8L1490.3 520.5z" fill="#24282d"/>
<path d="M1491.5 500.1L1499.7 494.8L1499.4 512.5L1491.2 518z" fill="#8d858c"/>
<path d="M1490.1 531.9L1500.1 525L1499.8 548.4L1489.7 555.8z" fill="#24282d"/>
<path d="M1490.9 536.1L1499.2 530.3L1498.9 547.1L1490.6 553.2z" fill="#8d858c"/>
<path d="M1517.7 386.4L1529.2 381.3L1528.2 462L1516.6 469z" fill="#2a2e34"/>
<path d="M1520.4 416.6L1525.7 413.9L1525.5 429.6L1520.2 432.5z" fill="#8d858c"/>
<path d="M1520 444.9L1525.4 441.9L1525.2 457.7L1519.8 460.8z" fill="#8d858c"/>
<path d="M1516.5 475.3L1528.1 468.1L1527.7 496.2L1516.1 504.1z" fill="#2a2e34"/>
<path d="M1519.5 484L1524.9 480.6L1524.7 495.6L1519.3 499.2z" fill="#8d858c"/>
<path d="M1516 510.4L1527.6 502.4L1527.3 528.9L1515.6 537.6z" fill="#2a2e34"/>
<path d="M1519.1 517.2L1524.4 513.4L1524.2 528.5L1518.9 532.5z" fill="#8d858c"/>
<path d="M1534.2 379L1542.7 375.3L1541.8 453.7L1533.2 458.9z" fill="#2a2e34"/>
<path d="M1536.1 408.6L1540 406.6L1539.9 421.9L1535.9 424z" fill="#8d858c"/>
<path d="M1535.8 436L1539.7 433.8L1539.5 449.1L1535.6 451.4z" fill="#8d858c"/>
<path d="M1533.1 465L1541.7 459.6L1541.4 487L1532.8 492.8z" fill="#2a2e34"/>
<path d="M1535.3 473.9L1539.3 471.3L1539.1 485.9L1535.2 488.6z" fill="#8d858c"/>
<path d="M1532.7 498.9L1541.3 493L1541 518.7L1532.4 525.1z" fill="#2a2e34"/>
<path d="M1535 505.9L1538.9 503.2L1538.8 517.8L1534.8 520.8z" fill="#8d858c"/>
<path d="M1547.6 373L1556.1 369.3L1555.4 445.4L1546.8 450.6z" fill="#2a2e34"/>
<path d="M1549.7 401.7L1553.6 399.8L1553.4 414.6L1549.5 416.7z" fill="#8d858c"/>
<path d="M1549.4 428.3L1553.3 426.1L1553.1 441L1549.2 443.4z" fill="#8d858c"/>
<path d="M1546.7 456.5L1555.3 451.2L1555.1 477.7L1546.5 483.5z" fill="#2a2e34"/>
<path d="M1549 465.1L1552.9 462.6L1552.8 476.8L1548.8 479.4z" fill="#8d858c"/>
<path d="M1546.4 489.5L1555 483.6L1554.7 508.6L1546.1 515z" fill="#2a2e34"/>
<path d="M1548.7 496.3L1552.6 493.5L1552.5 507.8L1548.5 510.7z" fill="#8d858c"/>
<path d="M1562.6 366.4L1570.1 363L1569.5 436.9L1561.9 441.5z" fill="#2a2e34"/>
<path d="M1564.4 394.3L1567.9 392.5L1567.7 406.9L1564.3 408.7z" fill="#8d858c"/>
<path d="M1564.2 420L1567.6 418L1567.5 432.5L1564 434.5z" fill="#8d858c"/>
<path d="M1561.9 447.2L1569.4 442.5L1569.2 468.2L1561.6 473.3z" fill="#2a2e34"/>
<path d="M1563.8 455.6L1567.3 453.4L1567.2 467.1L1563.7 469.5z" fill="#8d858c"/>
<path d="M1561.6 479L1569.2 473.8L1569 498.1L1561.3 503.7z" fill="#2a2e34"/>
<path d="M1563.6 485.8L1567.1 483.3L1567 497.1L1563.5 499.7z" fill="#8d858c"/>
<path d="M1576.1 360.4L1584.1 356.8L1583.6 428.3L1575.5 433.2z" fill="#2a2e34"/>
<path d="M1578.1 387.3L1581.8 385.4L1581.7 399.4L1578 401.3z" fill="#8d858c"/>
<path d="M1577.9 412.3L1581.6 410.2L1581.5 424.2L1577.8 426.4z" fill="#8d858c"/>
<path d="M1575.5 438.7L1583.5 433.7L1583.4 458.6L1575.3 464.1z" fill="#2a2e34"/>
<path d="M1577.6 446.8L1581.3 444.4L1581.2 457.7L1577.5 460.2z" fill="#8d858c"/>
<path d="M1575.2 469.6L1583.3 464.1L1583.2 487.5L1575 493.5z" fill="#2a2e34"/>
<path d="M1577.4 476L1581.1 473.4L1581 486.8L1577.3 489.5z" fill="#8d858c"/>
<path d="M1590.1 354.1L1596.1 351.5L1595.7 421L1589.6 424.6z" fill="#2a2e34"/>
<path d="M1591.5 380.5L1594.3 379.1L1594.2 392.6L1591.5 394.1z" fill="#8d858c"/>
<path d="M1591.4 404.7L1594.2 403.1L1594.1 416.7L1591.3 418.3z" fill="#8d858c"/>
<path d="M1589.6 430L1595.6 426.3L1595.5 450.4L1589.4 454.5z" fill="#2a2e34"/>
<path d="M1591.2 438.1L1594 436.3L1593.9 449.2L1591.1 451.1z" fill="#8d858c"/>
<path d="M1589.4 459.9L1595.5 455.7L1595.3 478.5L1589.2 483z" fill="#2a2e34"/>
<path d="M1591 466.4L1593.8 464.5L1593.7 477.4L1590.9 479.5z" fill="#8d858c"/>
<path d="M1601.1 349.2L1607.6 346.3L1607.2 414L1600.7 417.9z" fill="#2a2e34"/>
<path d="M1602.7 374.8L1605.7 373.3L1605.6 386.4L1602.6 388z" fill="#8d858c"/>
<path d="M1602.6 398.4L1605.6 396.7L1605.5 409.9L1602.5 411.7z" fill="#8d858c"/>
<path d="M1600.7 423.1L1607.2 419.1L1607.1 442.6L1600.5 447z" fill="#2a2e34"/>
<path d="M1602.4 430.9L1605.4 429L1605.4 441.6L1602.3 443.6z" fill="#8d858c"/>
<path d="M1600.5 452.3L1607.1 447.7L1607 469.9L1600.4 474.8z" fill="#2a2e34"/>
<path d="M1602.3 458.5L1605.3 456.4L1605.2 469L1602.2 471.2z" fill="#8d858c"/>
<path d="M1611 344.8L1617.5 341.9L1617.3 407.8L1610.8 411.8z" fill="#2a2e34"/>
<path d="M1612.7 369.7L1615.7 368.2L1615.7 381L1612.7 382.6z" fill="#8d858c"/>
<path d="M1612.6 392.7L1615.6 391L1615.6 403.9L1612.6 405.7z" fill="#8d858c"/>
<path d="M1610.7 416.9L1617.3 412.8L1617.2 435.8L1610.6 440.2z" fill="#2a2e34"/>
<path d="M1612.5 424.5L1615.5 422.6L1615.5 434.8L1612.4 436.8z" fill="#8d858c"/>
<path d="M1610.6 445.3L1617.2 440.8L1617.1 462.4L1610.5 467.3z" fill="#2a2e34"/>
<path d="M1612.4 451.4L1615.4 449.2L1615.4 461.5L1612.3 463.8z" fill="#8d858c"/>
<path d="M1624 350.1L1629 347.7L1628.9 373.2L1623.9 375.9z" fill="#24282d"/>
<path d="M1624.9 359.9L1628.1 358.3L1628.1 371.6L1624.8 373.3z" fill="#8d858c"/>
<path d="M1623.9 380.8L1628.9 378L1628.9 398.7L1623.8 401.8z" fill="#24282d"/>
<path d="M1624.8 388.6L1628 386.8L1628 397.6L1624.8 399.5z" fill="#8d858c"/>
<path d="M1623.8 411.6L1628.9 408.5L1628.8 427.2L1623.8 430.6z" fill="#24282d"/>
<path d="M1624.7 418.6L1627.9 416.5L1627.9 426.3L1624.7 428.5z" fill="#8d858c"/>
<path d="M1623.7 438.4L1628.8 434.9L1628.7 453.1L1623.7 456.8z" fill="#24282d"/>
<path d="M1624.6 445.1L1627.9 442.8L1627.8 452.3L1624.6 454.7z" fill="#8d858c"/>
<path d="M1631.5 346.6L1636.5 344.2L1636.5 369.1L1631.4 371.8z" fill="#24282d"/>
<path d="M1632.4 356.2L1635.6 354.6L1635.6 367.6L1632.4 369.3z" fill="#8d858c"/>
<path d="M1631.4 376.6L1636.5 373.9L1636.4 394.2L1631.4 397.2z" fill="#24282d"/>
<path d="M1632.3 384.3L1635.5 382.5L1635.5 393.1L1632.3 395z" fill="#8d858c"/>
<path d="M1631.4 406.9L1636.4 403.7L1636.4 422.1L1631.3 425.5z" fill="#24282d"/>
<path d="M1632.3 413.7L1635.5 411.7L1635.5 421.3L1632.2 423.4z" fill="#8d858c"/>
<path d="M1631.3 433.2L1636.4 429.7L1636.3 447.5L1631.3 451.2z" fill="#24282d"/>
<path d="M1632.2 439.7L1635.4 437.4L1635.4 446.7L1632.2 449.1z" fill="#8d858c"/>
<path d="M1640 342.5L1645 340.2L1645 364.6L1640 367.3z" fill="#24282d"/>
<path d="M1640.9 352L1644.1 350.4L1644.1 363.1L1640.9 364.8z" fill="#8d858c"/>
<path d="M1640 371.9L1645 369.2L1645 389.1L1639.9 392.1z" fill="#24282d"/>
<path d="M1640.9 379.5L1644.1 377.6L1644.1 388L1640.9 389.9z" fill="#8d858c"/>
<path d="M1639.9 401.5L1645 398.4L1644.9 416.4L1639.9 419.8z" fill="#24282d"/>
<path d="M1640.8 408.2L1644.1 406.1L1644 415.5L1640.8 417.7z" fill="#8d858c"/>
<path d="M1639.9 427.2L1644.9 423.7L1644.9 441.2L1639.9 444.9z" fill="#24282d"/>
<path d="M1640.8 433.6L1644 431.3L1644 440.4L1640.8 442.8z" fill="#8d858c"/>
<path d="M1405.3 537.6L1652.5 387.1L1652.5 390.4L1405.2 543.1z" fill="#d7d8de"/>
<path d="M1404.3 580.6L1652.5 412.6L1652.5 415.9L1404.1 586.2z" fill="#d7d8de"/>
<path d="M1403.2 623L1535.1 524.9L1534.8 546.8L1402.5 651z" fill="#272b30"/>
<path d="M1581 490.7L1652.5 437.5L1652.5 454L1580.9 510.4z" fill="#272b30"/>
<path d="M1535.5 499.5L1564.5 479L1564.5 512L1546 540L1535 552z" fill="#707070"/>
<path d="M1535 532L1541 529L1541 543L1535 548z" fill="#8fc9c4"/>
<path d="M1539.5 533h4v36l-2 1.8l-2 -1.8z" fill="#c2c2c8" stroke="#4c4c4c" stroke-width="1"/>
<path d="M1539.8 533h1.8v37.2l-1.8 -1.2z" fill="#8b8c86"/>
<path d="M1546.8 533.5h4v36.5l-2 1.8l-2 -1.8z" fill="#c2c2c8" stroke="#4c4c4c" stroke-width="1"/>
<path d="M1547 533.5h1.8v37.7l-1.8 -1.2z" fill="#8b8c86"/>
<path d="M1554 534h4v37l-2 1.8l-2 -1.8z" fill="#c2c2c8" stroke="#4c4c4c" stroke-width="1"/>
<path d="M1554.3 534h1.8v38.2l-1.8 -1.2z" fill="#8b8c86"/>
<path d="M1546 511.7L1561.5 510L1560.6 533L1545.2 532z" fill="#bccac7" stroke="#8a9696" stroke-width="0.5"/>
<path d="M1547 491.2L1564.5 479.5L1562.3 510L1547 511.7z" fill="#26282b"/>
<path d="M1564.5 479L1583.6 466L1583.6 491.2L1564.5 486.4z" fill="#94492c"/>
<path d="M1562.3 486L1582 491.2L1580.2 515L1562.3 506.6z" fill="#202325"/>
<path d="M1562.3 506.6L1580.2 515L1580.2 519L1562.3 510.5z" fill="#8fc9c4"/>
<path d="M1407 483L1456 455.5" fill="none" stroke="#7d828c" stroke-width="1.1"/>
<path d="M1456.2 410L1652.5 323.8" fill="none" stroke="#7d828c" stroke-width="1.1"/>
<path d="M1064 362.5L1407 483" fill="none" stroke="#7d828c" stroke-width="1.1"/>
<path d="M1407 483L1402.5 651" fill="none" stroke="#6a6a6a" stroke-width="0.8"/>
<path d="M1456.2 410L1455 456" fill="none" stroke="#6a4030" stroke-width="0.8"/>
<path d="M1650 346L1666 347.5L1660 440L1652.5 440z" fill="#bd6443" stroke="#55595c" stroke-width="0.5"/>
<path d="M1650 346L1655 343L1669 344.5L1666 347.5z" fill="#9b9ba0" stroke="#55595c" stroke-width="0.5"/>
<path d="M1652.5 387.5L1663.5 386" fill="none" stroke="#d7d8de" stroke-width="2"/>
<path d="M1652.5 412.5L1662 411" fill="none" stroke="#d7d8de" stroke-width="2"/>
<path d="M1652.5 439L1660 439L1659 451L1652.5 454z" fill="#1f2325"/>
<path d="M1434 563L1476 540L1481 545L1440 569z" fill="#9d9db8" stroke="#333" stroke-width="0.6"/>
<path d="M1434 563L1440 569L1440 574L1434 568z" fill="#222426"/>
<path d="M1440 569L1481 545L1481 550L1440 574z" fill="#2b2d30"/>
<path d="M1440 612L1462 584L1476 582L1476 592L1452 618z" fill="#8e9194" stroke="#444" stroke-width="0.5"/>
<path d="M1462 584L1464 575L1477 580L1476 592z" fill="#55585b"/>
<path d="M1599 449L1627 436L1632 440L1604 454z" fill="#9d9db8" stroke="#333" stroke-width="0.6"/>
<path d="M1599 449L1604 454L1604 458L1599 453z" fill="#222426"/>
<path d="M1604 454L1632 440L1632 444L1604 458z" fill="#2b2d30"/>
<path d="M1600 487L1614 470L1628 466L1622 478L1612 492z" fill="#8e9194" stroke="#444" stroke-width="0.5"/>
<path d="M1614 462L1632 466L1630 476L1622 478z" fill="#505356"/>
<path d="M1119 364l15 3.8v-16l-15 -3.8z" fill="#9a9d97" stroke="#5a5c5a" stroke-width="0.6"/>
<path d="M1121.5 364.6v-16M1124 365.2v-16M1126.5 365.9v-16M1129 366.5v-16M1131.5 367.1v-16" stroke="#5f615f" stroke-width="0.9" fill="none"/>
<path d="M1118 355.2l17 3.8" stroke="#c4c6c2" stroke-width="1" fill="none"/>
<path d="M1138 368l13 3.2v-14l-13 -3.2z" fill="#9a9d97" stroke="#5a5c5a" stroke-width="0.6"/>
<path d="M1140.6 368.6v-14M1143.2 369.3v-14M1145.8 369.9v-14M1148.4 370.6v-14" stroke="#5f615f" stroke-width="0.9" fill="none"/>
<path d="M1137 360.3l15 3.2" stroke="#c4c6c2" stroke-width="1" fill="none"/>
<path d="M1177 360l17 4.2v-17l-17 -4.2z" fill="#9a9d97" stroke="#5a5c5a" stroke-width="0.6"/>
<path d="M1179.4 360.6v-17M1181.9 361.2v-17M1184.3 361.8v-17M1186.7 362.4v-17M1189.1 363v-17M1191.6 363.6v-17" stroke="#5f615f" stroke-width="0.9" fill="none"/>
<path d="M1176 350.6l19 4.2" stroke="#c4c6c2" stroke-width="1" fill="none"/>
<path d="M1172 381l14 3.5v-16l-14 -3.5z" fill="#9a9d97" stroke="#5a5c5a" stroke-width="0.6"/>
<path d="M1174.3 381.6v-16M1176.7 382.2v-16M1179 382.8v-16M1181.3 383.3v-16M1183.7 383.9v-16" stroke="#5f615f" stroke-width="0.9" fill="none"/>
<path d="M1171 372.2l16 3.5" stroke="#c4c6c2" stroke-width="1" fill="none"/>
<path d="M1214 394l15 3.8v-18l-15 -3.8z" fill="#9a9d97" stroke="#5a5c5a" stroke-width="0.6"/>
<path d="M1216.5 394.6v-18M1219 395.2v-18M1221.5 395.9v-18M1224 396.5v-18M1226.5 397.1v-18" stroke="#5f615f" stroke-width="0.9" fill="none"/>
<path d="M1213 384.1l17 3.8" stroke="#c4c6c2" stroke-width="1" fill="none"/>
<path d="M1234 346l22 5.5v-16l-22 -5.5z" fill="#9a9d97" stroke="#5a5c5a" stroke-width="0.6"/>
<path d="M1236.2 346.6v-16M1238.4 347.1v-16M1240.6 347.6v-16M1242.8 348.2v-16M1245 348.8v-16M1247.2 349.3v-16M1249.4 349.9v-16M1251.6 350.4v-16M1253.8 350.9v-16" stroke="#5f615f" stroke-width="0.9" fill="none"/>
<path d="M1233 337.2l24 5.5" stroke="#c4c6c2" stroke-width="1" fill="none"/>
<path d="M1236 389l23 5.8v-20l-23 -5.8z" fill="#9a9d97" stroke="#5a5c5a" stroke-width="0.6"/>
<path d="M1238.3 389.6v-20M1240.6 390.1v-20M1242.9 390.7v-20M1245.2 391.3v-20M1247.5 391.9v-20M1249.8 392.4v-20M1252.1 393v-20M1254.4 393.6v-20M1256.7 394.2v-20" stroke="#5f615f" stroke-width="0.9" fill="none"/>
<path d="M1235 378l25 5.8" stroke="#c4c6c2" stroke-width="1" fill="none"/>
<path d="M1271 396l9 2.2v-18l-9 -2.2z" fill="#9a9d97" stroke="#5a5c5a" stroke-width="0.6"/>
<path d="M1273.2 396.6v-18M1275.5 397.1v-18M1277.8 397.7v-18" stroke="#5f615f" stroke-width="0.9" fill="none"/>
<path d="M1270 386.1l11 2.2" stroke="#c4c6c2" stroke-width="1" fill="none"/>
<path d="M1140 364V329" stroke="#5f6266" stroke-width="1.400" fill="none"/>
<path d="M1136.5 365.5L1140 360L1143.5 365.5z" fill="#8b8e91" stroke="#5c5f62" stroke-width="0.5"/>
<path d="M1199 354V317.5" stroke="#5f6266" stroke-width="1.400" fill="none"/>
<path d="M1195.5 355.5L1199 350L1202.5 355.5z" fill="#8b8e91" stroke="#5c5f62" stroke-width="0.5"/>
<path d="M1249 340V309" stroke="#5f6266" stroke-width="1.400" fill="none"/>
<path d="M1245.5 341.5L1249 336L1252.5 341.5z" fill="#8b8e91" stroke="#5c5f62" stroke-width="0.5"/>
<path d="M1221 376V346" stroke="#5f6266" stroke-width="1.400" fill="none"/>
<path d="M1217.5 377.5L1221 372L1224.5 377.5z" fill="#8b8e91" stroke="#5c5f62" stroke-width="0.5"/>
<path d="M1184 362V334" stroke="#5f6266" stroke-width="1.400" fill="none"/>
<path d="M1180.5 363.5L1184 358L1187.5 363.5z" fill="#8b8e91" stroke="#5c5f62" stroke-width="0.5"/>
<ellipse cx="1166" cy="376" rx="3.5" ry="1.8" fill="#b4b4b8" stroke="#6c6f72" stroke-width="0.6"/>
<ellipse cx="1206" cy="368" rx="3.5" ry="1.8" fill="#b4b4b8" stroke="#6c6f72" stroke-width="0.6"/>
<ellipse cx="1262" cy="372" rx="3.5" ry="1.8" fill="#b4b4b8" stroke="#6c6f72" stroke-width="0.6"/>
<ellipse cx="1290" cy="404" rx="3.5" ry="1.8" fill="#b4b4b8" stroke="#6c6f72" stroke-width="0.6"/>
<ellipse cx="1300" cy="440" rx="3.5" ry="1.8" fill="#b4b4b8" stroke="#6c6f72" stroke-width="0.6"/>
<path d="M1272 388c0-7 9-7 9 0v12h-9z" fill="#c4c4c6" stroke="#6c6f72" stroke-width="0.6"/>
<path d="M1284.5 410V372" stroke="#5f6266" stroke-width="1.400" fill="none"/>
<path d="M1281 411.5L1284.5 406L1288 411.5z" fill="#8b8e91" stroke="#5c5f62" stroke-width="0.5"/>
<path d="M1338 318l12 1.8v-12l-12 -1.8z" fill="#9a9d97" stroke="#5a5c5a" stroke-width="0.6"/>
<path d="M1340.4 318.4v-12M1342.8 318.7v-12M1345.2 319.1v-12M1347.6 319.4v-12" stroke="#5f615f" stroke-width="0.9" fill="none"/>
<path d="M1337 311.4l14 1.8" stroke="#c4c6c2" stroke-width="1" fill="none"/>
<path d="M1384 325l14 2.1v-12l-14 -2.1z" fill="#9a9d97" stroke="#5a5c5a" stroke-width="0.6"/>
<path d="M1386.3 325.4v-12M1388.7 325.7v-12M1391 326.1v-12M1393.3 326.4v-12M1395.7 326.8v-12" stroke="#5f615f" stroke-width="0.9" fill="none"/>
<path d="M1383 318.4l16 2.1" stroke="#c4c6c2" stroke-width="1" fill="none"/>
<path d="M1421 325l16 2.4v-13l-16 -2.4z" fill="#9a9d97" stroke="#5a5c5a" stroke-width="0.6"/>
<path d="M1423.3 325.3v-13M1425.6 325.7v-13M1427.9 326v-13M1430.1 326.4v-13M1432.4 326.7v-13M1434.7 327.1v-13" stroke="#5f615f" stroke-width="0.9" fill="none"/>
<path d="M1420 317.9l18 2.4" stroke="#c4c6c2" stroke-width="1" fill="none"/>
<path d="M1447 328l15 2.2v-12l-15 -2.2z" fill="#9a9d97" stroke="#5a5c5a" stroke-width="0.6"/>
<path d="M1449.5 328.4v-12M1452 328.8v-12M1454.5 329.1v-12M1457 329.5v-12M1459.5 329.9v-12" stroke="#5f615f" stroke-width="0.9" fill="none"/>
<path d="M1446 321.4l17 2.2" stroke="#c4c6c2" stroke-width="1" fill="none"/>
<path d="M1462 330l11 1.6v-11l-11 -1.6z" fill="#9a9d97" stroke="#5a5c5a" stroke-width="0.6"/>
<path d="M1464.2 330.3v-11M1466.4 330.7v-11M1468.6 331v-11M1470.8 331.3v-11" stroke="#5f615f" stroke-width="0.9" fill="none"/>
<path d="M1461 323.9l13 1.6" stroke="#c4c6c2" stroke-width="1" fill="none"/>
<path d="M1346 322V290" stroke="#5f6266" stroke-width="1.400" fill="none"/>
<path d="M1342.5 323.5L1346 318L1349.5 323.5z" fill="#8b8e91" stroke="#5c5f62" stroke-width="0.5"/>
<path d="M1392.5 327V289" stroke="#5f6266" stroke-width="1.400" fill="none"/>
<path d="M1389 328.5L1392.5 323L1396 328.5z" fill="#8b8e91" stroke="#5c5f62" stroke-width="0.5"/>
<path d="M1467 330V299" stroke="#5f6266" stroke-width="1.400" fill="none"/>
<path d="M1463.5 331.5L1467 326L1470.5 331.5z" fill="#8b8e91" stroke="#5c5f62" stroke-width="0.5"/>
<path d="M1295 330V299" stroke="#5f6266" stroke-width="1.400" fill="none"/>
<path d="M1291.5 331.5L1295 326L1298.5 331.5z" fill="#8b8e91" stroke="#5c5f62" stroke-width="0.5"/>
<path d="M1396 373l12 2.4v-12l-12 -2.4z" fill="#9a9d97" stroke="#5a5c5a" stroke-width="0.6"/>
<path d="M1398.4 373.5v-12M1400.8 374v-12M1403.2 374.4v-12M1405.6 374.9v-12" stroke="#5f615f" stroke-width="0.9" fill="none"/>
<path d="M1395 366.4l14 2.4" stroke="#c4c6c2" stroke-width="1" fill="none"/>
<path d="M1404 384l17 3.4v-15l-17 -3.4z" fill="#9a9d97" stroke="#5a5c5a" stroke-width="0.6"/>
<path d="M1406.4 384.5v-15M1408.9 385v-15M1411.3 385.5v-15M1413.7 385.9v-15M1416.1 386.4v-15M1418.6 386.9v-15" stroke="#5f615f" stroke-width="0.9" fill="none"/>
<path d="M1403 375.8l19 3.4" stroke="#c4c6c2" stroke-width="1" fill="none"/>
<path d="M1420 376l14 2.8v-13l-14 -2.8z" fill="#9a9d97" stroke="#5a5c5a" stroke-width="0.6"/>
<path d="M1422.3 376.5v-13M1424.7 376.9v-13M1427 377.4v-13M1429.3 377.9v-13M1431.7 378.3v-13" stroke="#5f615f" stroke-width="0.9" fill="none"/>
<path d="M1419 368.9l16 2.8" stroke="#c4c6c2" stroke-width="1" fill="none"/>
<path d="M1455 384l10 2v-10l-10 -2z" fill="#9a9d97" stroke="#5a5c5a" stroke-width="0.6"/>
<path d="M1457.5 384.5v-10M1460 385v-10M1462.5 385.5v-10" stroke="#5f615f" stroke-width="0.9" fill="none"/>
<path d="M1454 378.5l12 2" stroke="#c4c6c2" stroke-width="1" fill="none"/>
<path d="M1476 390l8 1.6v-9l-8 -1.6z" fill="#9a9d97" stroke="#5a5c5a" stroke-width="0.6"/>
<path d="M1478.7 390.5v-9M1481.3 391.1v-9" stroke="#5f615f" stroke-width="0.9" fill="none"/>
<path d="M1475 385.1l10 1.6" stroke="#c4c6c2" stroke-width="1" fill="none"/>
<path d="M1390 374V352" stroke="#5f6266" stroke-width="1.400" fill="none"/>
<path d="M1386.5 375.5L1390 370L1393.5 375.5z" fill="#8b8e91" stroke="#5c5f62" stroke-width="0.5"/>
<path d="M1424.5 394V356" stroke="#5f6266" stroke-width="1.400" fill="none"/>
<path d="M1421 395.5L1424.5 390L1428 395.5z" fill="#8b8e91" stroke="#5c5f62" stroke-width="0.5"/>
<path d="M1540 327V297" stroke="#5f6266" stroke-width="1.400" fill="none"/>
<path d="M1536.5 328.5L1540 323L1543.5 328.5z" fill="#8b8e91" stroke="#5c5f62" stroke-width="0.5"/>
<path d="M1581 332V301" stroke="#5f6266" stroke-width="1.400" fill="none"/>
<path d="M1577.5 333.5L1581 328L1584.5 333.5z" fill="#8b8e91" stroke="#5c5f62" stroke-width="0.5"/>
<path d="M1561 327l6 0.7v-9l-6 -0.7z" fill="#9a9d97" stroke="#5a5c5a" stroke-width="0.6"/>
<path d="M1563 327.2v-9M1565 327.5v-9" stroke="#5f615f" stroke-width="0.9" fill="none"/>
<path d="M1560 322.1l8 0.7" stroke="#c4c6c2" stroke-width="1" fill="none"/>
<path d="M1588 332l13 1.6v-9l-13 -1.6z" fill="#9a9d97" stroke="#5a5c5a" stroke-width="0.6"/>
<path d="M1590.6 332.3v-9M1593.2 332.6v-9M1595.8 332.9v-9M1598.4 333.2v-9" stroke="#5f615f" stroke-width="0.9" fill="none"/>
<path d="M1587 327.1l15 1.6" stroke="#c4c6c2" stroke-width="1" fill="none"/>
<path d="M1506 318l8 1v-6l-8 -1z" fill="#9a9d97" stroke="#5a5c5a" stroke-width="0.6"/>
<path d="M1508.7 318.3v-6M1511.3 318.6v-6" stroke="#5f615f" stroke-width="0.9" fill="none"/>
<path d="M1505 314.7l10 1" stroke="#c4c6c2" stroke-width="1" fill="none"/>
<path d="M1281 428l8 -2l6 3l-8 2z" fill="#b9b9bd" stroke="#6c6f72" stroke-width="0.6"/>
<path d="M1382 453l8 -2l6 3l-8 2z" fill="#b9b9bd" stroke="#6c6f72" stroke-width="0.6"/>
</g>
<!-- focus button -->
<rect x="947" y="36" width="32" height="32" fill="#535353"/>
<path d="M954.500 49v-5.500h5.500M966 43.500h5.500v5.500M971.500 55v5.500h-5.500M960 60.500h-5.500v-5.500" fill="none" stroke="#f4f4f4" stroke-width="1"/>
<path d="M963 47l4.300 2.500v5l-4.300 2.500l-4.300-2.500v-5z" fill="#e4e4e4"/>
<!-- view cube -->
<g stroke="#333" stroke-width="1.300" stroke-linejoin="round" fill="#fff">
<path d="M1690.500 85.200L1728.500 79.800L1770.200 84.100L1733.700 91.500z"/>
<path d="M1690.500 85.200L1733.700 91.500V156.600L1696 134.600z"/>
<path d="M1733.700 91.500L1770.200 84.100L1764.800 133.200L1733.700 156.600z"/>
</g>
<text transform="matrix(0.740 0.400 0 1.400 1699.300 116.500)" font-size="9.500" fill="#8a8a8a">Справа</text>
<text transform="matrix(0.680 -0.420 -0.100 1.500 1743 131)" font-size="9.500" fill="#8a8a8a" font-style="italic">Сзади</text>
<!-- gizmo -->
<circle cx="997" cy="702.800" r="46.300" fill="#636363"/>
<path d="M997 702.800V682" stroke="#0000f0" stroke-width="1.800"/><path d="M997 674.500l2.800 9.500h-5.600z" fill="#0000f0"/>
<path d="M997 702.800L982 708.200" stroke="#f00000" stroke-width="1.800"/><path d="M975.500 710.500l7.500-5.800l2 5.300z" fill="#f00000"/>
<path d="M997 702.800L1013 707.500" stroke="#00e000" stroke-width="1.800"/><path d="M1021 709.500l-9.500 0.500l1.800-5.500z" fill="#00e000"/>
<circle cx="997" cy="702.800" r="3.600" fill="#a8a8a8"/>
<text transform="translate(997.500 669) scale(0.820 1.150)" font-size="9.500" fill="#0000f0">Z</text>
<text x="968.800" y="713.300" font-size="9.500" fill="#f00000">X</text>
<text x="1027.800" y="711.800" font-size="9.500" fill="#00d800">Y</text>
</svg>
<div id="right">
<svg class="abs" style="left:1806px;top:36px" width="37" height="776" viewBox="1806 36 37 776" fill="none" stroke="#e2e2e2" stroke-width="1.500" stroke-linejoin="round">
<rect x="1806" y="36" width="36" height="776" fill="#535353" stroke="none"/>
<rect x="1842" y="28" width="1" height="792" fill="#3c3c44" stroke="none"/>
<g stroke="#777" stroke-width="1"><path d="M1806 127.500h36M1806 397.500h36M1806 446.500h36M1806 627.500h36M1806 720.500h36"/></g>
<!-- tree cloud -->
<path d="M1819 66h-1.500a4.800 4.800 0 0 1 -0.500-9.500a7 7 0 0 1 13.500-1.500a5.500 5.500 0 0 1 1 11h-2.500M1824.300 55v17M1824.300 63.500l-4.500-4M1824.300 66l4-4"/>
<!-- screens -->
<path d="M1823 108.500h-11.500v-17h23.500v7M1817 108.500v2.500h5"/>
<path d="M1821.500 104v-3.500h4M1832.500 100.500h4v3.500M1836.500 112.500v3.500h-4M1825.500 116h-4v-3.500"/>
<path d="M1829 103.500l4.300 2.500v5l-4.300 2.500l-4.300-2.500v-5z" fill="#e2e2e2" stroke="none"/>
<!-- ruler -->
<rect x="1814.500" y="149.500" width="19" height="6.500" stroke-width="1.200"/>
<path d="M1814 158h20" stroke-width="1"/>
<path d="M1817.500 150v3.500M1820.500 150v2.500M1823.500 150v3.500M1826.500 150v2.500M1829.500 150v3.500M1831.500 150v2.500" stroke-width="1"/>
<path d="M1810 163v5h5z" fill="#e2e2e2" stroke="none"/>
<!-- section plane -->
<path d="M1811 199.500L1821 192.500L1837.500 193.500L1827 200.500z" stroke-width="1.200"/>
<path d="M1819.500 190.500L1829 183V202.500L1819.500 211z" fill="#dcdcdc" stroke="none"/>
<!-- section box -->
<path d="M1812.500 236.500l5.500-5.500h17.500v15.500l-5.500 5h-17.500zM1812.500 236.500h17.500v15M1830 236.500l5.500-5.500M1818 231v15.500h17.500M1812.500 251.500l5.500-5" stroke-width="1.200"/>
<path d="M1821 234l4.500-3v17.500l-4.500 3z" fill="#e2e2e2" stroke="none"/>
<!-- floor plan -->
<path d="M1811 278l3-3.500h23.500v19l-1 1.500h-25.500z" stroke-width="1.600"/>
<path d="M1811 284.500h26M1823.500 275v19" stroke-width="1" stroke-dasharray="3 1.500"/>
<path d="M1829 294v-3.500h8" stroke-width="1.200"/>
<!-- target -->
<circle cx="1824" cy="329" r="7.500" stroke-width="2"/><circle cx="1824" cy="329" r="4" fill="#e2e2e2" stroke="none"/>
<path d="M1824 318v4M1824 336v4M1813 329h4M1831 329h4" stroke-width="2"/>
<!-- flag -->
<circle cx="1824" cy="373" r="12.300" stroke-width="1.300"/>
<path d="M1818.500 380v-12.500c3-2 5-1 7 0s4 1.500 6 0v7.500c-2 1.500-4 1-6 0s-4-2-7 0" stroke-width="1.300"/>
<!-- grid lines -->
<path d="M1811 425.600L1838 410M1811.200 434.800L1837.800 419.500M1812 420.700L1829 430.500M1819.800 415L1836.800 424.700" stroke-width="1.100"/>
<text x="1810.500" y="418.800" font-size="5.500" fill="#e2e2e2" stroke="none" font-family="Liberation Sans, sans-serif">1</text>
<text x="1819.800" y="413" font-size="5.500" fill="#e2e2e2" stroke="none" font-family="Liberation Sans, sans-serif">2</text>
<!-- dashed boxes -->
<g stroke-dasharray="2 2" stroke-width="1.200"><rect x="1812.500" y="459.500" width="23" height="23"/><rect x="1812.500" y="503.500" width="23" height="23"/><rect x="1812.500" y="547.500" width="23" height="23"/><path d="M1822 614.500h-9.500v-23h23v9"/></g>
<path d="M1824 464.500l5.500 3v6.500l-5.500 3l-5.500-3v-6.500zM1818.500 467.500l5.500 3l5.500-3M1824 470.500v6.500" stroke-width="1.100"/>
<!-- eye -->
<path d="M1816 515c2-3.500 5-5 8-5s6 1.500 8 5c-2 3.500-5 5-8 5s-6-1.500-8-5z" fill="#e2e2e2" stroke="none"/><circle cx="1824" cy="515" r="2.600" fill="#535353" stroke="#535353" stroke-width="1"/><circle cx="1824" cy="515" r="1.200" fill="#e2e2e2" stroke="none"/>
<!-- eye off -->
<path d="M1816 559c2-3.500 5-5 8-5s6 1.500 8 5c-2 3.500-5 5-8 5s-6-1.500-8-5z" fill="#e2e2e2" stroke="none"/><circle cx="1824.500" cy="559" r="2.500" fill="#535353" stroke="none"/>
<path d="M1817.500 553l13 12" stroke="#535353" stroke-width="3"/><path d="M1817.500 553l13 12" stroke-width="1.300"/>
<!-- x box -->
<rect x="1822" y="601" width="16" height="16" fill="#e2e2e2" stroke="none"/><path d="M1826 605l8 8M1834 605l-8 8" stroke="#444" stroke-width="1.300"/>
<!-- light buttons -->
<rect x="1808" y="636" width="32" height="32" fill="#8a8a8a" stroke="none"/><rect x="1808" y="680" width="32" height="32" fill="#8a8a8a" stroke="none"/>
<path d="M1814 644.800L1823.300 642L1833.800 643.700L1824.400 647.600z" fill="#8a8a8a" stroke="#e4e4e4" stroke-width="1"/>
<path d="M1824.400 647.600L1833.800 643.700L1832.700 655.800L1823.900 663z" fill="#7e7e7e" stroke="#e4e4e4" stroke-width="1"/>
<path d="M1814 644.800L1824.400 647.600L1823.900 663L1815 655.800z" fill="#e2e2e2" stroke="#e4e4e4" stroke-width="1"/>
<ellipse cx="1824" cy="696" rx="11.500" ry="5" stroke-width="1.800" stroke="#e6e6e6"/><ellipse cx="1824" cy="696" rx="4.800" ry="10.500" stroke-width="1.800" stroke="#e6e6e6"/>
<path d="M1824 692.500v3.500l-3 3M1824 696l3 3" stroke-width=".9"/>
</svg>
</div>

</body>
</html>
